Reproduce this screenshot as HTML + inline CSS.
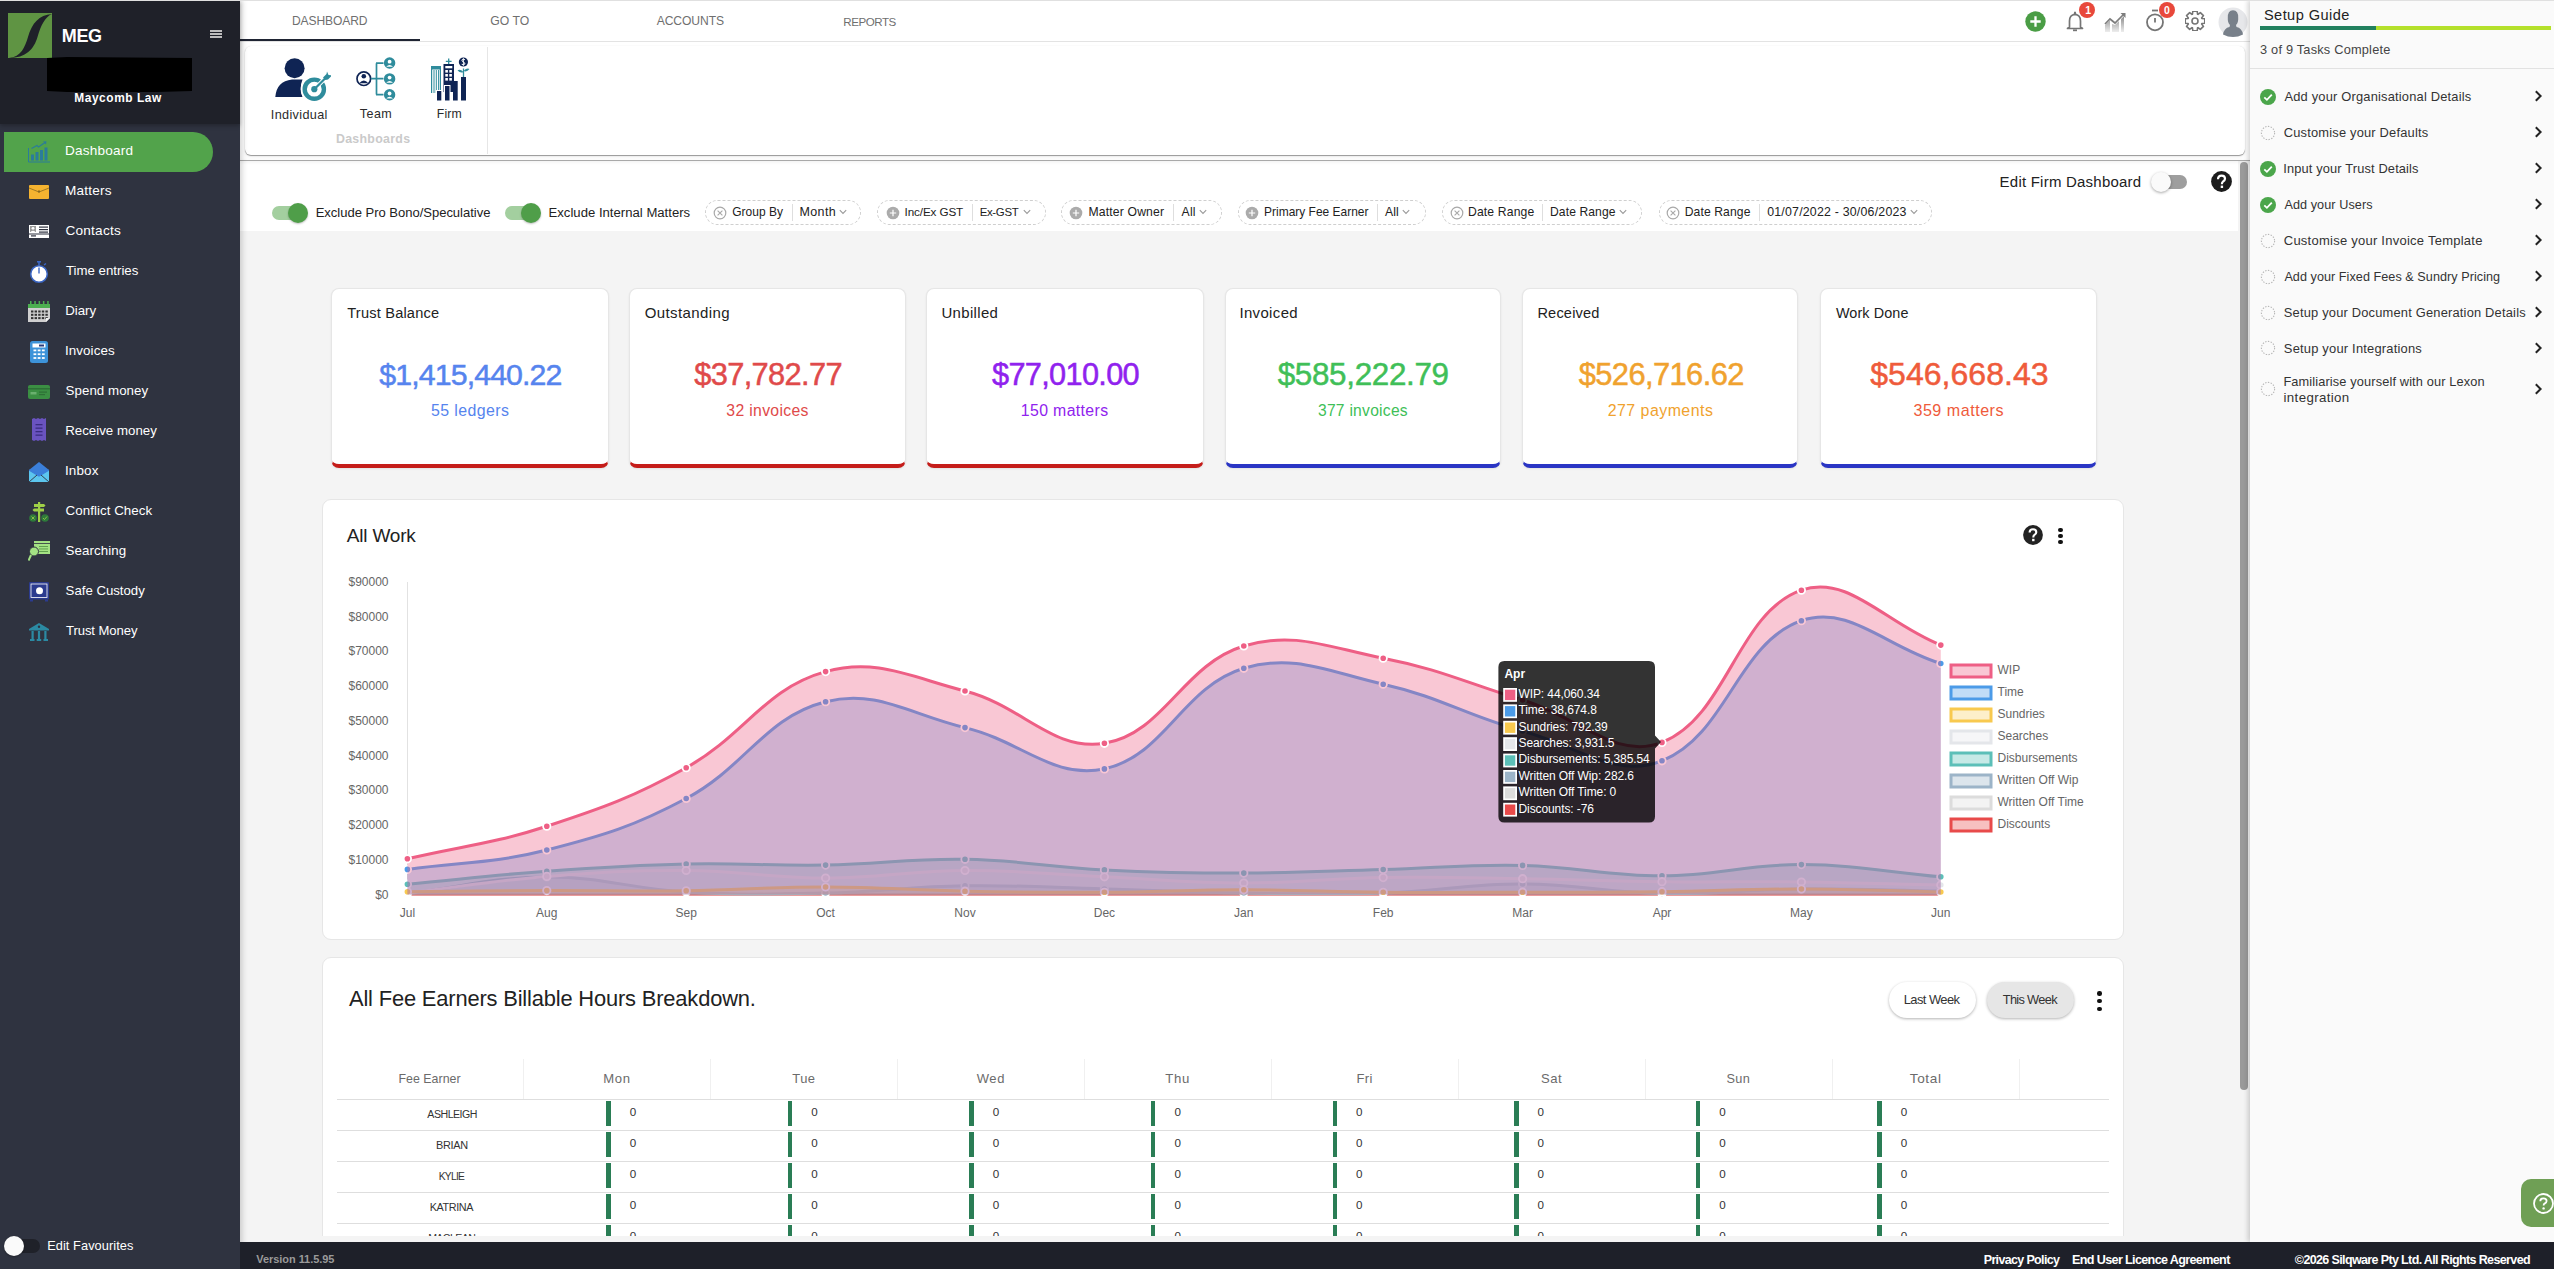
<!DOCTYPE html>
<html><head><meta charset="utf-8"><title>MEG Dashboard</title><style>
*{margin:0;padding:0;box-sizing:border-box}
html,body{width:2554px;height:1269px;overflow:hidden;background:#f4f4f4;font-family:"Liberation Sans",sans-serif}
.t{position:absolute;white-space:nowrap;line-height:1}
.r{position:absolute;display:block}
.ct{font-family:"Liberation Sans",sans-serif;font-size:12px;fill:#666}
</style></head><body>
<div class="r" style="left:240px;top:0;width:2314px;height:1242px;background:#f4f4f4"></div>
<div class="r" style="left:0;top:0;width:2554px;height:1px;background:#e0e0e0;z-index:5"></div>
<div class="r" style="left:240px;top:0px;width:2010px;height:41px;background:#fff;"></div>
<div class="r" style="left:240px;top:41px;width:2010px;height:1px;background:#e3e3e3;"></div>
<div class="r" style="left:240px;top:39px;width:180px;height:2px;background:#1f2433;"></div>
<div class="t" style="left:292.03px;top:15.00px;font-size:12.06px;letter-spacing:-0.114px;color:#6f6f6f;">DASHBOARD</div>
<div class="t" style="left:490.29px;top:15.00px;font-size:12.22px;letter-spacing:0.009px;color:#6f6f6f;">GO TO</div>
<div class="t" style="left:656.70px;top:15.00px;font-size:12.12px;letter-spacing:-0.075px;color:#6f6f6f;">ACCOUNTS</div>
<div class="t" style="left:843.27px;top:16.00px;font-size:11.60px;letter-spacing:-0.480px;color:#6f6f6f;">REPORTS</div>
<div class="r" style="left:240px;top:42px;width:2010px;height:118px;background:#fff;"></div>
<div class="r" style="left:245px;top:46px;width:2000px;height:109px;background:#fff;border-radius:6px;box-shadow:0 1px 1px rgba(0,0,0,.38),0 2px 4px rgba(0,0,0,.06),0 0 1px rgba(0,0,0,.12);"></div>
<div class="r" style="left:487px;top:47px;width:1px;height:107px;background:#e6e6e6;"></div>
<svg class="r" style="left:275px;top:57px;" width="56" height="46" viewBox="0 0 56 46"><circle cx="19.6" cy="11.2" r="10" fill="#0f2454"/><path d="M0.3 40 Q1.5 24 17 22.4 L27.5 22.4 Q24 31 27.5 40 Z" fill="#0f2454"/><circle cx="39.3" cy="32.2" r="13.6" fill="#fff"/><circle cx="39.3" cy="32.2" r="9.6" fill="none" stroke="#2f8c9c" stroke-width="4.4"/><path d="M44 27.5 L50 21.5" stroke="#fff" stroke-width="4"/><circle cx="39.3" cy="32.2" r="3.1" fill="#2f8c9c"/><path d="M39.3 32.2 L50.5 21" stroke="#2f8c9c" stroke-width="2.2"/><path d="M48 20.5 L51.5 17 L52 14.5 L53.5 18 L57 18.5 L53 22.5 L50.5 23 Z" fill="#2f8c9c"/></svg>
<svg class="r" style="left:356px;top:57px;" width="40" height="44" viewBox="0 0 40 44"><circle cx="7.8" cy="21.7" r="6.8" fill="#fff" stroke="#0f2454" stroke-width="1.7"/><circle cx="7.8" cy="19.3" r="2.3" fill="#0f2454"/><path d="M3.2 26.2 Q7.8 21 12.4 26.2 Z" fill="#0f2454"/><path d="M14.8 21.7 H27.5 M20.5 6.2 V37.6 M20 6.2 H27.5 M20 37.6 H27.5" stroke="#2f8c9c" stroke-width="1.7" fill="none"/><circle cx="33.6" cy="6" r="5.7" fill="#2f8c9c"/><circle cx="33.6" cy="4.7" r="1.9" fill="#fff"/><path d="M30.2 9.8 Q33.6 6.3 37 9.8 Z" fill="#fff"/><circle cx="33.6" cy="21.9" r="5.7" fill="#2f8c9c"/><circle cx="33.6" cy="20.599999999999998" r="1.9" fill="#fff"/><path d="M30.2 25.7 Q33.6 22.2 37 25.7 Z" fill="#fff"/><circle cx="33.6" cy="37.8" r="5.7" fill="#2f8c9c"/><circle cx="33.6" cy="36.5" r="1.9" fill="#fff"/><path d="M30.2 41.599999999999994 Q33.6 38.099999999999994 37 41.599999999999994 Z" fill="#fff"/></svg>
<svg class="r" style="left:430px;top:57px;" width="40" height="45" viewBox="0 0 40 45"><rect x="1" y="9" width="10" height="27.5" fill="#fff"/><path d="M1.6 36 V9.6 H10.4 V36" fill="none" stroke="#2f8c9c" stroke-width="1.2"/><rect x="1" y="9" width="10" height="3.5" fill="#2f8c9c"/><path d="M4 13 V36 M6.3 13 V36 M8.6 13 V36" stroke="#2f8c9c" stroke-width="1"/><rect x="13.5" y="7" width="10.5" height="28" fill="#0f2454"/><path d="M18.7 1.5 V7 M15.8 4.3 H21.6" stroke="#2f8c9c" stroke-width="1.3"/><rect x="15.3" y="9" width="7" height="2.3" fill="#fff"/><rect x="15.3" y="13" width="2.6" height="2.6" fill="#fff"/><rect x="19.3" y="13" width="2.6" height="2.6" fill="#fff"/><rect x="15.3" y="17" width="2.6" height="2.6" fill="#fff"/><rect x="19.3" y="17" width="2.6" height="2.6" fill="#fff"/><rect x="15.3" y="21" width="2.6" height="2.6" fill="#fff"/><rect x="19.3" y="21" width="2.6" height="2.6" fill="#fff"/><rect x="6" y="33" width="6.3" height="12" fill="#fff"/><rect x="7" y="34" width="4.3" height="9.5" fill="#0f2454"/><rect x="14" y="28" width="6.5" height="17" fill="#fff"/><rect x="15" y="29" width="4.5" height="14.5" fill="#0f2454"/><rect x="23" y="24" width="4.7" height="19.5" fill="#0f2454"/><rect x="31" y="20" width="5" height="23.5" fill="#0f2454"/><circle cx="33.4" cy="5" r="4.6" fill="#0f2454"/><path d="M35 2.7 Q33.4 1.8 32 2.8 Q31.2 4 33.4 5 Q35.6 5.9 34.8 7.2 Q33.4 8.2 31.7 7.3 M33.4 1.2 V8.8" stroke="#fff" stroke-width="0.9" fill="none"/><path d="M33.5 20 V11.5" stroke="#2f8c9c" stroke-width="1.3"/><path d="M33.5 15 Q30 11.5 27.5 13.5 Q30.5 16.5 33.5 15 Z M33.5 14 Q37 10.5 39.5 12 Q37 15.5 33.5 14 Z" fill="#2f8c9c"/></svg>
<div class="t" style="left:270.86px;top:109.00px;font-size:12.67px;letter-spacing:0.338px;color:#2b2b2b;">Individual</div>
<div class="t" style="left:359.75px;top:108.00px;font-size:12.53px;letter-spacing:0.479px;color:#2b2b2b;">Team</div>
<div class="t" style="left:436.72px;top:108.00px;font-size:12.24px;letter-spacing:0.198px;color:#2b2b2b;">Firm</div>
<div class="t" style="left:336.00px;top:133.00px;font-size:12.37px;letter-spacing:0.287px;color:#cacaca;font-weight:700;">Dashboards</div>
<div class="r" style="left:240px;top:161px;width:1998px;height:70px;background:#fff;"></div>
<div class="r" style="left:240px;top:160px;width:2010px;height:1px;background:#a9a9a9;box-shadow:0 1px 3px rgba(0,0,0,.12);"></div>
<div class="r" style="left:272px;top:206px;width:32px;height:14px;background:#a3cf9f;border-radius:7px;"></div>
<div class="r" style="left:288px;top:203px;width:20px;height:20px;background:#4f9e49;border-radius:50%;box-shadow:0 1px 2px rgba(0,0,0,.25);"></div>
<div class="r" style="left:505px;top:206px;width:32px;height:14px;background:#a3cf9f;border-radius:7px;"></div>
<div class="r" style="left:521px;top:203px;width:20px;height:20px;background:#4f9e49;border-radius:50%;box-shadow:0 1px 2px rgba(0,0,0,.25);"></div>
<div class="t" style="left:315.66px;top:206.00px;font-size:13.04px;letter-spacing:-0.020px;color:#222;">Exclude Pro Bono/Speculative</div>
<div class="t" style="left:548.55px;top:206.00px;font-size:13.11px;letter-spacing:0.011px;color:#222;">Exclude Internal Matters</div>
<div class="r" style="left:705px;top:200px;width:156px;height:25px;border:1px dashed #cfcfcf;border-radius:13px;box-sizing:border-box;"></div>
<svg class="r" style="left:713px;top:205.5px;" width="14" height="14" viewBox="0 0 14 14"><circle cx="7" cy="7" r="5.8" fill="none" stroke="#a8a8a8" stroke-width="1.2"/><path d="M4.6 4.6 L9.4 9.4 M9.4 4.6 L4.6 9.4" stroke="#a8a8a8" stroke-width="1.1"/></svg>
<div class="t" style="left:732.20px;top:207.00px;font-size:11.97px;letter-spacing:0.031px;color:#222;">Group By</div>
<div class="r" style="left:792px;top:204px;width:1px;height:17px;background:#dedede;"></div>
<div class="t" style="left:799.50px;top:206.00px;font-size:12.49px;letter-spacing:0.379px;color:#222;">Month</div>
<svg class="r" style="left:839px;top:209px;" width="8" height="6" viewBox="0 0 8 6"><path d="M0.8 1.2 L4 4.4 L7.2 1.2" stroke="#999" stroke-width="1.1" fill="none"/></svg>
<div class="r" style="left:877px;top:200px;width:169px;height:25px;border:1px dashed #cfcfcf;border-radius:13px;box-sizing:border-box;"></div>
<svg class="r" style="left:886px;top:205.5px;" width="14" height="14" viewBox="0 0 14 14"><circle cx="7" cy="7" r="6.3" fill="#ababab"/><path d="M7 3.8 V10.2 M3.8 7 H10.2" stroke="#fff" stroke-width="1.2"/></svg>
<div class="t" style="left:904.55px;top:206.00px;font-size:11.70px;letter-spacing:-0.122px;color:#222;">Inc/Ex GST</div>
<div class="r" style="left:972px;top:204px;width:1px;height:17px;background:#dedede;"></div>
<div class="t" style="left:979.68px;top:207.00px;font-size:11.44px;letter-spacing:-0.328px;color:#222;">Ex-GST</div>
<svg class="r" style="left:1022.5px;top:209px;" width="8" height="6" viewBox="0 0 8 6"><path d="M0.8 1.2 L4 4.4 L7.2 1.2" stroke="#999" stroke-width="1.1" fill="none"/></svg>
<div class="r" style="left:1061px;top:200px;width:161px;height:25px;border:1px dashed #cfcfcf;border-radius:13px;box-sizing:border-box;"></div>
<svg class="r" style="left:1069.3px;top:205.5px;" width="14" height="14" viewBox="0 0 14 14"><circle cx="7" cy="7" r="6.3" fill="#ababab"/><path d="M7 3.8 V10.2 M3.8 7 H10.2" stroke="#fff" stroke-width="1.2"/></svg>
<div class="t" style="left:1088.52px;top:206.00px;font-size:12.20px;letter-spacing:0.155px;color:#222;">Matter Owner</div>
<div class="r" style="left:1173px;top:204px;width:1px;height:17px;background:#dedede;"></div>
<div class="t" style="left:1181.60px;top:206.00px;font-size:12.23px;letter-spacing:0.161px;color:#222;">All</div>
<svg class="r" style="left:1198.7px;top:209px;" width="8" height="6" viewBox="0 0 8 6"><path d="M0.8 1.2 L4 4.4 L7.2 1.2" stroke="#999" stroke-width="1.1" fill="none"/></svg>
<div class="r" style="left:1238px;top:200px;width:188px;height:25px;border:1px dashed #cfcfcf;border-radius:13px;box-sizing:border-box;"></div>
<svg class="r" style="left:1245px;top:205.5px;" width="14" height="14" viewBox="0 0 14 14"><circle cx="7" cy="7" r="6.3" fill="#ababab"/><path d="M7 3.8 V10.2 M3.8 7 H10.2" stroke="#fff" stroke-width="1.2"/></svg>
<div class="t" style="left:1264.04px;top:207.00px;font-size:11.95px;letter-spacing:0.016px;color:#222;">Primary Fee Earner</div>
<div class="r" style="left:1377px;top:204px;width:1px;height:17px;background:#dedede;"></div>
<div class="t" style="left:1385.00px;top:206.00px;font-size:12.18px;letter-spacing:0.136px;color:#222;">All</div>
<svg class="r" style="left:1402px;top:209px;" width="8" height="6" viewBox="0 0 8 6"><path d="M0.8 1.2 L4 4.4 L7.2 1.2" stroke="#999" stroke-width="1.1" fill="none"/></svg>
<div class="r" style="left:1442px;top:200px;width:200px;height:25px;border:1px dashed #cfcfcf;border-radius:13px;box-sizing:border-box;"></div>
<svg class="r" style="left:1449.8px;top:205.5px;" width="14" height="14" viewBox="0 0 14 14"><circle cx="7" cy="7" r="5.8" fill="none" stroke="#a8a8a8" stroke-width="1.2"/><path d="M4.6 4.6 L9.4 9.4 M9.4 4.6 L4.6 9.4" stroke="#a8a8a8" stroke-width="1.1"/></svg>
<div class="t" style="left:1468.03px;top:206.00px;font-size:12.17px;letter-spacing:0.147px;color:#222;">Date Range</div>
<div class="r" style="left:1542px;top:204px;width:1px;height:17px;background:#dedede;"></div>
<div class="t" style="left:1550.03px;top:206.00px;font-size:12.10px;letter-spacing:0.102px;color:#222;">Date Range</div>
<svg class="r" style="left:1619px;top:209px;" width="8" height="6" viewBox="0 0 8 6"><path d="M0.8 1.2 L4 4.4 L7.2 1.2" stroke="#999" stroke-width="1.1" fill="none"/></svg>
<div class="r" style="left:1659px;top:200px;width:273px;height:25px;border:1px dashed #cfcfcf;border-radius:13px;box-sizing:border-box;"></div>
<svg class="r" style="left:1666px;top:205.5px;" width="14" height="14" viewBox="0 0 14 14"><circle cx="7" cy="7" r="5.8" fill="none" stroke="#a8a8a8" stroke-width="1.2"/><path d="M4.6 4.6 L9.4 9.4 M9.4 4.6 L4.6 9.4" stroke="#a8a8a8" stroke-width="1.1"/></svg>
<div class="t" style="left:1684.73px;top:206.00px;font-size:12.12px;letter-spacing:0.119px;color:#222;">Date Range</div>
<div class="r" style="left:1759px;top:204px;width:1px;height:17px;background:#dedede;"></div>
<div class="t" style="left:1767.21px;top:206.00px;font-size:12.35px;letter-spacing:0.212px;color:#222;">01/07/2022 - 30/06/2023</div>
<svg class="r" style="left:1910px;top:209px;" width="8" height="6" viewBox="0 0 8 6"><path d="M0.8 1.2 L4 4.4 L7.2 1.2" stroke="#999" stroke-width="1.1" fill="none"/></svg>
<div class="t" style="left:1999.60px;top:174.00px;font-size:14.99px;letter-spacing:0.229px;color:#222;">Edit Firm Dashboard</div>
<div class="r" style="left:2155px;top:175px;width:32px;height:14px;background:#9e9e9e;border-radius:7px;"></div>
<div class="r" style="left:2151px;top:172px;width:20px;height:20px;background:#fafafa;border-radius:50%;box-shadow:0 1px 3px rgba(0,0,0,.35);"></div>
<svg class="r" style="left:2210.5px;top:170.5px;" width="21" height="21" viewBox="0 0 21 21"><circle cx="10.5" cy="10.5" r="10.4" fill="#1c1c1c"/><path d="M7 8.2 Q7 4.6 10.6 4.6 Q14 4.6 14 7.8 Q14 9.6 11.8 10.8 Q10.9 11.4 10.9 13.2" stroke="#fff" stroke-width="2.2" fill="none"/><rect x="9.7" y="14.6" width="2.4" height="2.4" fill="#fff"/></svg>
<svg class="r" style="left:2024.8px;top:10.7px;" width="21" height="21" viewBox="0 0 21 21"><circle cx="10.5" cy="10.5" r="10.2" fill="#4a9d45"/><path d="M10.5 5.3 V15.7 M5.3 10.5 H15.7" stroke="#fff" stroke-width="2.3"/></svg>
<svg class="r" style="left:2066px;top:11px;" width="18" height="21" viewBox="0 0 18 21"><path d="M9 1.5 Q9 1 9 2 M3.5 16 V10 Q3.5 3.8 9 3.5 Q14.5 3.8 14.5 10 V16 L16.5 17.5 H1.5 Z" fill="none" stroke="#757575" stroke-width="1.7" stroke-linejoin="round"/><circle cx="9" cy="2.2" r="1.2" fill="#757575"/><path d="M7 19.3 H11" stroke="#757575" stroke-width="1.8"/></svg>
<div class="r" style="left:2079px;top:2px;width:16px;height:16px;background:#e8483b;border-radius:50%;"></div>
<div class="t" style="left:2085.17px;top:6.00px;font-size:10.47px;letter-spacing:0.000px;color:#fff;font-weight:700;">1</div>
<svg class="r" style="left:2104px;top:12px;" width="23" height="20" viewBox="0 0 23 20"><defs><linearGradient id="gfade" x1="0" y1="0" x2="0" y2="1"><stop offset="0" stop-color="#8a8a8a"/><stop offset="1" stop-color="#8a8a8a" stop-opacity="0.15"/></linearGradient></defs><path d="M1 12 L6 7 L11 11 L20 2" stroke="#7d7d7d" stroke-width="1.7" fill="none"/><path d="M16.5 1 H21.5 V6 Z" fill="#7d7d7d"/><path d="M1 13 L6 8.5 L6 20 H1 Z M8 12 L11 13 L15 9 V20 H8 Z M17 7 L20 4 V20 H17 Z" fill="url(#gfade)"/></svg>
<svg class="r" style="left:2145px;top:9px;" width="20" height="23" viewBox="0 0 20 23"><path d="M7 1.5 H13" stroke="#757575" stroke-width="1.8"/><circle cx="10" cy="13.3" r="8" fill="none" stroke="#757575" stroke-width="1.8"/><path d="M10 9 V13.5" stroke="#757575" stroke-width="1.8"/></svg>
<div class="r" style="left:2159px;top:2px;width:16px;height:16px;background:#e8483b;border-radius:50%;"></div>
<div class="t" style="left:2163.98px;top:6.00px;font-size:10.47px;letter-spacing:0.000px;color:#fff;font-weight:700;">0</div>
<svg class="r" style="left:2185px;top:11px;" width="20" height="20" viewBox="0 0 20 20"><path d="M19.76 7.82 L19.76 12.18 L16.83 12.57 L16.65 13.01 L18.44 15.36 L15.36 18.44 L13.01 16.65 L12.57 16.83 L12.18 19.76 L7.82 19.76 L7.43 16.83 L6.99 16.65 L4.64 18.44 L1.56 15.36 L3.35 13.01 L3.17 12.57 L0.24 12.18 L0.24 7.82 L3.17 7.43 L3.35 6.99 L1.56 4.64 L4.64 1.56 L6.99 3.35 L7.43 3.17 L7.82 0.24 L12.18 0.24 L12.57 3.17 L13.01 3.35 L15.36 1.56 L18.44 4.64 L16.65 6.99 L16.83 7.43 Z" fill="none" stroke="#757575" stroke-width="1.6" stroke-linejoin="round"/><circle cx="10" cy="10" r="3" fill="none" stroke="#757575" stroke-width="1.6"/></svg>
<svg class="r" style="left:2218px;top:7px;" width="30" height="30" viewBox="0 0 30 30"><circle cx="15" cy="15" r="14.5" fill="#e6e7ea"/><path d="M5 27.5 Q6 21 11.5 20 L12 18 Q9.5 15.5 9.8 11 Q9.5 3.5 15 3.3 Q20.5 3.5 20.2 11 Q20.5 15.5 18 18 L18.5 20 Q24 21 25 27.5 Q20 30 15 30 Q10 30 5 27.5 Z" fill="#78808a"/></svg>
<div class="r" style="left:331px;top:288px;width:278px;height:180px;background:#fff;border:1px solid #e6e6e6;border-bottom:4px solid #c51d1a;border-radius:8px;box-sizing:border-box;box-shadow:0 1px 2px rgba(0,0,0,.08);"></div>
<div class="t" style="left:347.31px;top:306.00px;font-size:14.61px;letter-spacing:0.185px;color:#222;">Trust Balance</div>
<div class="t" style="left:379.30px;top:360.00px;font-size:30.30px;letter-spacing:-0.886px;color:#5684ee;-webkit-text-stroke:0.5px #5684ee;">$1,415,440.22</div>
<div class="t" style="left:430.96px;top:403.00px;font-size:15.92px;letter-spacing:0.408px;color:#5684ee;">55 ledgers</div>
<div class="r" style="left:629px;top:288px;width:277px;height:180px;background:#fff;border:1px solid #e6e6e6;border-bottom:4px solid #c51d1a;border-radius:8px;box-sizing:border-box;box-shadow:0 1px 2px rgba(0,0,0,.08);"></div>
<div class="t" style="left:644.72px;top:305.00px;font-size:15.00px;letter-spacing:0.401px;color:#222;">Outstanding</div>
<div class="t" style="left:694.19px;top:360.00px;font-size:30.80px;letter-spacing:-0.646px;color:#e04a4a;-webkit-text-stroke:0.5px #e04a4a;">$37,782.77</div>
<div class="t" style="left:726.35px;top:403.00px;font-size:15.77px;letter-spacing:0.325px;color:#e04a4a;">32 invoices</div>
<div class="r" style="left:926px;top:288px;width:278px;height:180px;background:#fff;border:1px solid #e6e6e6;border-bottom:4px solid #c51d1a;border-radius:8px;box-sizing:border-box;box-shadow:0 1px 2px rgba(0,0,0,.08);"></div>
<div class="t" style="left:941.48px;top:306.00px;font-size:14.95px;letter-spacing:0.350px;color:#222;">Unbilled</div>
<div class="t" style="left:992.09px;top:360.00px;font-size:30.73px;letter-spacing:-0.689px;color:#9022ee;-webkit-text-stroke:0.5px #9022ee;">$77,010.00</div>
<div class="t" style="left:1020.81px;top:403.00px;font-size:15.84px;letter-spacing:0.372px;color:#9022ee;">150 matters</div>
<div class="r" style="left:1225px;top:288px;width:276px;height:180px;background:#fff;border:1px solid #e6e6e6;border-bottom:4px solid #2a35c4;border-radius:8px;box-sizing:border-box;box-shadow:0 1px 2px rgba(0,0,0,.08);"></div>
<div class="t" style="left:1239.45px;top:306.00px;font-size:14.95px;letter-spacing:0.363px;color:#222;">Invoiced</div>
<div class="t" style="left:1277.69px;top:359.00px;font-size:31.40px;letter-spacing:-0.317px;color:#40bf58;-webkit-text-stroke:0.5px #40bf58;">$585,222.79</div>
<div class="t" style="left:1317.95px;top:403.00px;font-size:15.64px;letter-spacing:0.260px;color:#40bf58;">377 invoices</div>
<div class="r" style="left:1522px;top:288px;width:276px;height:180px;background:#fff;border:1px solid #e6e6e6;border-bottom:4px solid #2a35c4;border-radius:8px;box-sizing:border-box;box-shadow:0 1px 2px rgba(0,0,0,.08);"></div>
<div class="t" style="left:1537.43px;top:306.00px;font-size:14.57px;letter-spacing:0.185px;color:#222;">Received</div>
<div class="t" style="left:1578.69px;top:360.00px;font-size:30.89px;letter-spacing:-0.599px;color:#f0a22e;-webkit-text-stroke:0.5px #f0a22e;">$526,716.62</div>
<div class="t" style="left:1607.70px;top:403.00px;font-size:15.94px;letter-spacing:0.462px;color:#f0a22e;">277 payments</div>
<div class="r" style="left:1820px;top:288px;width:277px;height:180px;background:#fff;border:1px solid #e6e6e6;border-bottom:4px solid #2a35c4;border-radius:8px;box-sizing:border-box;box-shadow:0 1px 2px rgba(0,0,0,.08);"></div>
<div class="t" style="left:1835.93px;top:306.00px;font-size:14.40px;letter-spacing:0.094px;color:#222;">Work Done</div>
<div class="t" style="left:1870.28px;top:358.00px;font-size:32.02px;letter-spacing:0.025px;color:#ef5b3b;-webkit-text-stroke:0.5px #ef5b3b;">$546,668.43</div>
<div class="t" style="left:1913.44px;top:402.00px;font-size:16.10px;letter-spacing:0.512px;color:#ef5b3b;">359 matters</div>
<div class="r" style="left:322px;top:498.5px;width:1802px;height:441.5px;background:#fff;border:1px solid #e6e6e6;border-radius:9px;box-sizing:border-box;"></div>
<div class="t" style="left:346.70px;top:526.00px;font-size:19.00px;letter-spacing:-0.173px;color:#222;">All Work</div>
<svg class="r" style="left:2023px;top:525.3px;" width="20" height="20" viewBox="0 0 20 20"><circle cx="10" cy="10" r="9.9" fill="#222"/><path d="M6.6 7.6 Q6.6 4.2 10 4.2 Q13.3 4.2 13.3 7.2 Q13.3 9 11.2 10.2 Q10.3 10.8 10.3 12.6" stroke="#fff" stroke-width="2.1" fill="none"/><rect x="9.1" y="13.8" width="2.4" height="2.4" fill="#fff"/></svg>
<div class="r" style="left:2058.3px;top:527.5px;width:4.599999999999909px;height:4.599999999999909px;background:#111;border-radius:50%;"></div>
<div class="r" style="left:2058.3px;top:533.7px;width:4.599999999999909px;height:4.599999999999909px;background:#111;border-radius:50%;"></div>
<div class="r" style="left:2058.3px;top:539.9000000000001px;width:4.599999999999909px;height:4.599999999999909px;background:#111;border-radius:50%;"></div>
<svg class="r" style="left:0;top:0" width="2554" height="1269" viewBox="0 0 2554 1269"><text x="388.5" y="585.7" text-anchor="end" class="ct">$90000</text><text x="388.5" y="620.5" text-anchor="end" class="ct">$80000</text><text x="388.5" y="655.3" text-anchor="end" class="ct">$70000</text><text x="388.5" y="690.1" text-anchor="end" class="ct">$60000</text><text x="388.5" y="724.9" text-anchor="end" class="ct">$50000</text><text x="388.5" y="759.6" text-anchor="end" class="ct">$40000</text><text x="388.5" y="794.4" text-anchor="end" class="ct">$30000</text><text x="388.5" y="829.2" text-anchor="end" class="ct">$20000</text><text x="388.5" y="864.0" text-anchor="end" class="ct">$10000</text><text x="388.5" y="898.8" text-anchor="end" class="ct">$0</text><line x1="407.5" y1="582" x2="407.5" y2="895" stroke="#e2e2e2" stroke-width="1"/><text x="407.4" y="916.6" text-anchor="middle" class="ct">Jul</text><text x="546.8" y="916.6" text-anchor="middle" class="ct">Aug</text><text x="686.2" y="916.6" text-anchor="middle" class="ct">Sep</text><text x="825.6" y="916.6" text-anchor="middle" class="ct">Oct</text><text x="965.0" y="916.6" text-anchor="middle" class="ct">Nov</text><text x="1104.4" y="916.6" text-anchor="middle" class="ct">Dec</text><text x="1243.8" y="916.6" text-anchor="middle" class="ct">Jan</text><text x="1383.2" y="916.6" text-anchor="middle" class="ct">Feb</text><text x="1522.6" y="916.6" text-anchor="middle" class="ct">Mar</text><text x="1662.0" y="916.6" text-anchor="middle" class="ct">Apr</text><text x="1801.4" y="916.6" text-anchor="middle" class="ct">May</text><text x="1940.8" y="916.6" text-anchor="middle" class="ct">Jun</text><defs><clipPath id="carea"><rect x="380" y="560" width="1600" height="335.6"/></clipPath></defs><g clip-path="url(#carea)"><path d="M407.40 894.50 C463.16 894.50 491.04 894.50 546.80 894.50 C602.56 894.50 630.44 894.50 686.20 894.50 C741.96 894.50 769.84 894.50 825.60 894.50 C881.36 894.50 909.24 894.50 965.00 894.50 C1020.76 894.50 1048.64 894.50 1104.40 894.50 C1160.16 894.50 1188.04 894.50 1243.80 894.50 C1299.56 894.50 1327.44 894.50 1383.20 894.50 C1438.96 894.50 1466.84 894.50 1522.60 894.50 C1578.36 894.50 1606.24 894.50 1662.00 894.50 C1717.76 894.50 1745.64 894.50 1801.40 894.50 C1857.16 894.50 1885.04 894.50 1940.80 894.50 L1940.80 894.5 L407.40 894.5 Z" fill="rgba(220,220,220,0.35)"/><path d="M407.40 894.50 C463.16 894.50 491.04 894.50 546.80 894.50 C602.56 894.50 630.44 894.50 686.20 894.50 C741.96 894.50 769.84 894.50 825.60 894.50 C881.36 894.50 909.24 894.50 965.00 894.50 C1020.76 894.50 1048.64 894.50 1104.40 894.50 C1160.16 894.50 1188.04 894.50 1243.80 894.50 C1299.56 894.50 1327.44 894.50 1383.20 894.50 C1438.96 894.50 1466.84 894.50 1522.60 894.50 C1578.36 894.50 1606.24 894.50 1662.00 894.50 C1717.76 894.50 1745.64 894.50 1801.40 894.50 C1857.16 894.50 1885.04 894.50 1940.80 894.50" fill="none" stroke="#dcdcdc" stroke-width="3"/></g><g clip-path="url(#carea)"><path d="M407.40 894.80 C463.16 894.80 491.04 894.80 546.80 894.80 C602.56 894.80 630.44 894.80 686.20 894.80 C741.96 894.80 769.84 894.80 825.60 894.80 C881.36 894.80 909.24 894.80 965.00 894.80 C1020.76 894.80 1048.64 894.80 1104.40 894.80 C1160.16 894.80 1188.04 894.80 1243.80 894.80 C1299.56 894.80 1327.44 894.80 1383.20 894.80 C1438.96 894.80 1466.84 894.80 1522.60 894.80 C1578.36 894.80 1606.24 894.80 1662.00 894.80 C1717.76 894.80 1745.64 894.80 1801.40 894.80 C1857.16 894.80 1885.04 894.80 1940.80 894.80 L1940.80 894.5 L407.40 894.5 Z" fill="rgba(232,74,74,0.35)"/><path d="M407.40 894.80 C463.16 894.80 491.04 894.80 546.80 894.80 C602.56 894.80 630.44 894.80 686.20 894.80 C741.96 894.80 769.84 894.80 825.60 894.80 C881.36 894.80 909.24 894.80 965.00 894.80 C1020.76 894.80 1048.64 894.80 1104.40 894.80 C1160.16 894.80 1188.04 894.80 1243.80 894.80 C1299.56 894.80 1327.44 894.80 1383.20 894.80 C1438.96 894.80 1466.84 894.80 1522.60 894.80 C1578.36 894.80 1606.24 894.80 1662.00 894.80 C1717.76 894.80 1745.64 894.80 1801.40 894.80 C1857.16 894.80 1885.04 894.80 1940.80 894.80" fill="none" stroke="#e84a4a" stroke-width="3"/></g><g clip-path="url(#carea)"><path d="M407.40 893.50 C463.16 886.90 491.01 877.30 546.80 877.00 C602.53 876.70 630.28 888.79 686.20 892.00 C741.80 895.19 769.88 894.24 825.60 893.00 C881.40 891.76 909.21 886.60 965.00 885.80 C1020.73 885.00 1048.64 887.56 1104.40 889.00 C1160.16 890.44 1188.03 892.20 1243.80 893.00 C1299.55 893.80 1327.50 894.80 1383.20 893.00 C1439.02 891.20 1466.85 883.90 1522.60 884.00 C1578.37 884.10 1606.19 892.50 1662.00 893.50 C1717.71 894.50 1745.63 889.50 1801.40 889.00 C1857.15 888.50 1885.04 890.20 1940.80 891.00 L1940.80 894.5 L407.40 894.5 Z" fill="rgba(156,180,200,0.35)"/><path d="M407.40 893.50 C463.16 886.90 491.01 877.30 546.80 877.00 C602.53 876.70 630.28 888.79 686.20 892.00 C741.80 895.19 769.88 894.24 825.60 893.00 C881.40 891.76 909.21 886.60 965.00 885.80 C1020.73 885.00 1048.64 887.56 1104.40 889.00 C1160.16 890.44 1188.03 892.20 1243.80 893.00 C1299.55 893.80 1327.50 894.80 1383.20 893.00 C1439.02 891.20 1466.85 883.90 1522.60 884.00 C1578.37 884.10 1606.19 892.50 1662.00 893.50 C1717.71 894.50 1745.63 889.50 1801.40 889.00 C1857.15 888.50 1885.04 890.20 1940.80 891.00" fill="none" stroke="#9cb4c8" stroke-width="3"/></g><circle cx="407.40" cy="893.50" r="3.7" fill="#9cb4c8" stroke="#fff" stroke-width="1.8"/><circle cx="546.80" cy="877.00" r="3.7" fill="#9cb4c8" stroke="#fff" stroke-width="1.8"/><circle cx="686.20" cy="892.00" r="3.7" fill="#9cb4c8" stroke="#fff" stroke-width="1.8"/><circle cx="825.60" cy="893.00" r="3.7" fill="#9cb4c8" stroke="#fff" stroke-width="1.8"/><circle cx="965.00" cy="885.80" r="3.7" fill="#9cb4c8" stroke="#fff" stroke-width="1.8"/><circle cx="1104.40" cy="889.00" r="3.7" fill="#9cb4c8" stroke="#fff" stroke-width="1.8"/><circle cx="1243.80" cy="893.00" r="3.7" fill="#9cb4c8" stroke="#fff" stroke-width="1.8"/><circle cx="1383.20" cy="893.00" r="3.7" fill="#9cb4c8" stroke="#fff" stroke-width="1.8"/><circle cx="1522.60" cy="884.00" r="3.7" fill="#9cb4c8" stroke="#fff" stroke-width="1.8"/><circle cx="1662.00" cy="893.50" r="3.7" fill="#9cb4c8" stroke="#fff" stroke-width="1.8"/><circle cx="1801.40" cy="889.00" r="3.7" fill="#9cb4c8" stroke="#fff" stroke-width="1.8"/><circle cx="1940.80" cy="891.00" r="3.7" fill="#9cb4c8" stroke="#fff" stroke-width="1.8"/><g clip-path="url(#carea)"><path d="M407.40 884.20 C463.16 879.00 490.96 875.25 546.80 871.20 C602.48 867.17 630.40 865.22 686.20 864.00 C741.92 862.78 769.86 866.04 825.60 865.10 C881.38 864.16 909.30 858.34 965.00 859.30 C1020.82 860.26 1048.57 867.14 1104.40 869.90 C1160.09 872.66 1188.04 873.18 1243.80 873.10 C1299.56 873.02 1327.44 871.04 1383.20 869.50 C1438.96 867.96 1466.91 864.14 1522.60 865.40 C1578.43 866.66 1606.25 875.96 1662.00 875.80 C1717.77 875.64 1745.66 864.40 1801.40 864.60 C1857.18 864.80 1885.04 871.92 1940.80 876.80 L1940.80 894.5 L407.40 894.5 Z" fill="rgba(92,191,184,0.35)"/><path d="M407.40 884.20 C463.16 879.00 490.96 875.25 546.80 871.20 C602.48 867.17 630.40 865.22 686.20 864.00 C741.92 862.78 769.86 866.04 825.60 865.10 C881.38 864.16 909.30 858.34 965.00 859.30 C1020.82 860.26 1048.57 867.14 1104.40 869.90 C1160.09 872.66 1188.04 873.18 1243.80 873.10 C1299.56 873.02 1327.44 871.04 1383.20 869.50 C1438.96 867.96 1466.91 864.14 1522.60 865.40 C1578.43 866.66 1606.25 875.96 1662.00 875.80 C1717.77 875.64 1745.66 864.40 1801.40 864.60 C1857.18 864.80 1885.04 871.92 1940.80 876.80" fill="none" stroke="#5cbfb8" stroke-width="3"/></g><circle cx="407.40" cy="884.20" r="3.7" fill="#5cbfb8" stroke="#fff" stroke-width="1.8"/><circle cx="546.80" cy="871.20" r="3.7" fill="#5cbfb8" stroke="#fff" stroke-width="1.8"/><circle cx="686.20" cy="864.00" r="3.7" fill="#5cbfb8" stroke="#fff" stroke-width="1.8"/><circle cx="825.60" cy="865.10" r="3.7" fill="#5cbfb8" stroke="#fff" stroke-width="1.8"/><circle cx="965.00" cy="859.30" r="3.7" fill="#5cbfb8" stroke="#fff" stroke-width="1.8"/><circle cx="1104.40" cy="869.90" r="3.7" fill="#5cbfb8" stroke="#fff" stroke-width="1.8"/><circle cx="1243.80" cy="873.10" r="3.7" fill="#5cbfb8" stroke="#fff" stroke-width="1.8"/><circle cx="1383.20" cy="869.50" r="3.7" fill="#5cbfb8" stroke="#fff" stroke-width="1.8"/><circle cx="1522.60" cy="865.40" r="3.7" fill="#5cbfb8" stroke="#fff" stroke-width="1.8"/><circle cx="1662.00" cy="875.80" r="3.7" fill="#5cbfb8" stroke="#fff" stroke-width="1.8"/><circle cx="1801.40" cy="864.60" r="3.7" fill="#5cbfb8" stroke="#fff" stroke-width="1.8"/><circle cx="1940.80" cy="876.80" r="3.7" fill="#5cbfb8" stroke="#fff" stroke-width="1.8"/><g clip-path="url(#carea)"><path d="M407.40 893.00 C463.16 886.36 490.87 880.91 546.80 876.40 C602.39 871.91 630.46 870.18 686.20 870.50 C741.98 870.82 769.84 878.00 825.60 878.00 C881.36 878.00 909.23 870.74 965.00 870.50 C1020.75 870.26 1048.64 874.30 1104.40 876.80 C1160.16 879.30 1188.03 882.84 1243.80 883.00 C1299.55 883.16 1327.42 878.46 1383.20 877.60 C1438.94 876.74 1466.85 877.88 1522.60 878.70 C1578.37 879.52 1606.23 881.04 1662.00 881.70 C1717.75 882.36 1745.65 881.34 1801.40 882.00 C1857.17 882.66 1885.04 883.80 1940.80 885.00 L1940.80 894.5 L407.40 894.5 Z" fill="rgba(228,230,234,0.35)"/><path d="M407.40 893.00 C463.16 886.36 490.87 880.91 546.80 876.40 C602.39 871.91 630.46 870.18 686.20 870.50 C741.98 870.82 769.84 878.00 825.60 878.00 C881.36 878.00 909.23 870.74 965.00 870.50 C1020.75 870.26 1048.64 874.30 1104.40 876.80 C1160.16 879.30 1188.03 882.84 1243.80 883.00 C1299.55 883.16 1327.42 878.46 1383.20 877.60 C1438.94 876.74 1466.85 877.88 1522.60 878.70 C1578.37 879.52 1606.23 881.04 1662.00 881.70 C1717.75 882.36 1745.65 881.34 1801.40 882.00 C1857.17 882.66 1885.04 883.80 1940.80 885.00" fill="none" stroke="#e4e6ea" stroke-width="3"/></g><circle cx="407.40" cy="893.00" r="3.7" fill="#e4e6ea" stroke="#fff" stroke-width="1.8"/><circle cx="546.80" cy="876.40" r="3.7" fill="#e4e6ea" stroke="#fff" stroke-width="1.8"/><circle cx="686.20" cy="870.50" r="3.7" fill="#e4e6ea" stroke="#fff" stroke-width="1.8"/><circle cx="825.60" cy="878.00" r="3.7" fill="#e4e6ea" stroke="#fff" stroke-width="1.8"/><circle cx="965.00" cy="870.50" r="3.7" fill="#e4e6ea" stroke="#fff" stroke-width="1.8"/><circle cx="1104.40" cy="876.80" r="3.7" fill="#e4e6ea" stroke="#fff" stroke-width="1.8"/><circle cx="1243.80" cy="883.00" r="3.7" fill="#e4e6ea" stroke="#fff" stroke-width="1.8"/><circle cx="1383.20" cy="877.60" r="3.7" fill="#e4e6ea" stroke="#fff" stroke-width="1.8"/><circle cx="1522.60" cy="878.70" r="3.7" fill="#e4e6ea" stroke="#fff" stroke-width="1.8"/><circle cx="1662.00" cy="881.70" r="3.7" fill="#e4e6ea" stroke="#fff" stroke-width="1.8"/><circle cx="1801.40" cy="882.00" r="3.7" fill="#e4e6ea" stroke="#fff" stroke-width="1.8"/><circle cx="1940.80" cy="885.00" r="3.7" fill="#e4e6ea" stroke="#fff" stroke-width="1.8"/><g clip-path="url(#carea)"><path d="M407.40 891.70 C463.16 891.26 491.04 890.78 546.80 890.60 C602.56 890.42 630.45 891.52 686.20 890.80 C741.97 890.08 769.84 886.92 825.60 887.00 C881.36 887.08 909.23 890.14 965.00 891.20 C1020.75 892.26 1048.64 892.58 1104.40 892.30 C1160.16 892.02 1188.04 889.80 1243.80 889.80 C1299.56 889.80 1327.44 891.82 1383.20 892.30 C1438.96 892.78 1466.84 892.32 1522.60 892.20 C1578.36 892.08 1606.25 892.34 1662.00 891.70 C1717.77 891.06 1745.64 888.94 1801.40 889.00 C1857.16 889.06 1885.04 890.80 1940.80 892.00 L1940.80 894.5 L407.40 894.5 Z" fill="rgba(248,201,79,0.3)"/><path d="M407.40 891.70 C463.16 891.26 491.04 890.78 546.80 890.60 C602.56 890.42 630.45 891.52 686.20 890.80 C741.97 890.08 769.84 886.92 825.60 887.00 C881.36 887.08 909.23 890.14 965.00 891.20 C1020.75 892.26 1048.64 892.58 1104.40 892.30 C1160.16 892.02 1188.04 889.80 1243.80 889.80 C1299.56 889.80 1327.44 891.82 1383.20 892.30 C1438.96 892.78 1466.84 892.32 1522.60 892.20 C1578.36 892.08 1606.25 892.34 1662.00 891.70 C1717.77 891.06 1745.64 888.94 1801.40 889.00 C1857.16 889.06 1885.04 890.80 1940.80 892.00" fill="none" stroke="#f8c94f" stroke-width="3"/></g><circle cx="407.40" cy="891.70" r="3.7" fill="#f8c94f" stroke="#fff" stroke-width="1.8"/><circle cx="546.80" cy="890.60" r="3.7" fill="#f8c94f" stroke="#fff" stroke-width="1.8"/><circle cx="686.20" cy="890.80" r="3.7" fill="#f8c94f" stroke="#fff" stroke-width="1.8"/><circle cx="825.60" cy="887.00" r="3.7" fill="#f8c94f" stroke="#fff" stroke-width="1.8"/><circle cx="965.00" cy="891.20" r="3.7" fill="#f8c94f" stroke="#fff" stroke-width="1.8"/><circle cx="1104.40" cy="892.30" r="3.7" fill="#f8c94f" stroke="#fff" stroke-width="1.8"/><circle cx="1243.80" cy="889.80" r="3.7" fill="#f8c94f" stroke="#fff" stroke-width="1.8"/><circle cx="1383.20" cy="892.30" r="3.7" fill="#f8c94f" stroke="#fff" stroke-width="1.8"/><circle cx="1522.60" cy="892.20" r="3.7" fill="#f8c94f" stroke="#fff" stroke-width="1.8"/><circle cx="1662.00" cy="891.70" r="3.7" fill="#f8c94f" stroke="#fff" stroke-width="1.8"/><circle cx="1801.40" cy="889.00" r="3.7" fill="#f8c94f" stroke="#fff" stroke-width="1.8"/><circle cx="1940.80" cy="892.00" r="3.7" fill="#f8c94f" stroke="#fff" stroke-width="1.8"/><g clip-path="url(#carea)"><path d="M407.40 869.40 C463.16 861.64 492.56 863.79 546.80 850.00 C604.08 835.43 634.14 826.19 686.20 798.50 C745.66 766.87 764.84 717.15 825.60 701.70 C876.36 688.79 909.94 714.33 965.00 727.60 C1021.46 741.21 1053.30 779.77 1104.40 768.90 C1164.82 756.05 1182.40 686.95 1243.80 668.30 C1293.92 653.07 1328.75 671.95 1383.20 684.20 C1440.27 697.03 1465.97 715.44 1522.60 731.00 C1577.49 746.08 1615.27 779.29 1662.00 760.80 C1726.79 735.17 1737.23 643.10 1801.40 620.70 C1848.75 604.18 1885.04 646.38 1940.80 663.50 L1940.80 894.5 L407.40 894.5 Z" fill="rgba(76,155,232,0.35)"/><path d="M407.40 869.40 C463.16 861.64 492.56 863.79 546.80 850.00 C604.08 835.43 634.14 826.19 686.20 798.50 C745.66 766.87 764.84 717.15 825.60 701.70 C876.36 688.79 909.94 714.33 965.00 727.60 C1021.46 741.21 1053.30 779.77 1104.40 768.90 C1164.82 756.05 1182.40 686.95 1243.80 668.30 C1293.92 653.07 1328.75 671.95 1383.20 684.20 C1440.27 697.03 1465.97 715.44 1522.60 731.00 C1577.49 746.08 1615.27 779.29 1662.00 760.80 C1726.79 735.17 1737.23 643.10 1801.40 620.70 C1848.75 604.18 1885.04 646.38 1940.80 663.50" fill="none" stroke="#4c9be8" stroke-width="3"/></g><circle cx="407.40" cy="869.40" r="3.7" fill="#4c9be8" stroke="#fff" stroke-width="1.8"/><circle cx="546.80" cy="850.00" r="3.7" fill="#4c9be8" stroke="#fff" stroke-width="1.8"/><circle cx="686.20" cy="798.50" r="3.7" fill="#4c9be8" stroke="#fff" stroke-width="1.8"/><circle cx="825.60" cy="701.70" r="3.7" fill="#4c9be8" stroke="#fff" stroke-width="1.8"/><circle cx="965.00" cy="727.60" r="3.7" fill="#4c9be8" stroke="#fff" stroke-width="1.8"/><circle cx="1104.40" cy="768.90" r="3.7" fill="#4c9be8" stroke="#fff" stroke-width="1.8"/><circle cx="1243.80" cy="668.30" r="3.7" fill="#4c9be8" stroke="#fff" stroke-width="1.8"/><circle cx="1383.20" cy="684.20" r="3.7" fill="#4c9be8" stroke="#fff" stroke-width="1.8"/><circle cx="1522.60" cy="731.00" r="3.7" fill="#4c9be8" stroke="#fff" stroke-width="1.8"/><circle cx="1662.00" cy="760.80" r="3.7" fill="#4c9be8" stroke="#fff" stroke-width="1.8"/><circle cx="1801.40" cy="620.70" r="3.7" fill="#4c9be8" stroke="#fff" stroke-width="1.8"/><circle cx="1940.80" cy="663.50" r="3.7" fill="#4c9be8" stroke="#fff" stroke-width="1.8"/><g clip-path="url(#carea)"><path d="M407.40 858.80 C463.16 845.76 492.56 843.92 546.80 826.20 C604.08 807.48 633.60 796.87 686.20 767.70 C745.12 735.03 764.70 688.35 825.60 671.60 C876.22 657.67 910.81 677.06 965.00 691.00 C1022.33 705.74 1052.33 751.70 1104.40 743.30 C1163.85 733.70 1182.63 664.67 1243.80 646.00 C1294.15 630.63 1328.53 647.61 1383.20 658.20 C1440.05 669.21 1466.87 683.17 1522.60 700.00 C1578.39 716.85 1615.85 760.58 1662.00 742.40 C1727.37 716.66 1736.78 612.75 1801.40 590.20 C1848.30 573.83 1885.04 623.14 1940.80 645.10 L1940.80 894.5 L407.40 894.5 Z" fill="rgba(238,95,133,0.35)"/><path d="M407.40 858.80 C463.16 845.76 492.56 843.92 546.80 826.20 C604.08 807.48 633.60 796.87 686.20 767.70 C745.12 735.03 764.70 688.35 825.60 671.60 C876.22 657.67 910.81 677.06 965.00 691.00 C1022.33 705.74 1052.33 751.70 1104.40 743.30 C1163.85 733.70 1182.63 664.67 1243.80 646.00 C1294.15 630.63 1328.53 647.61 1383.20 658.20 C1440.05 669.21 1466.87 683.17 1522.60 700.00 C1578.39 716.85 1615.85 760.58 1662.00 742.40 C1727.37 716.66 1736.78 612.75 1801.40 590.20 C1848.30 573.83 1885.04 623.14 1940.80 645.10" fill="none" stroke="#ee5f85" stroke-width="3"/></g><circle cx="407.40" cy="858.80" r="3.7" fill="#ee5f85" stroke="#fff" stroke-width="1.8"/><circle cx="546.80" cy="826.20" r="3.7" fill="#ee5f85" stroke="#fff" stroke-width="1.8"/><circle cx="686.20" cy="767.70" r="3.7" fill="#ee5f85" stroke="#fff" stroke-width="1.8"/><circle cx="825.60" cy="671.60" r="3.7" fill="#ee5f85" stroke="#fff" stroke-width="1.8"/><circle cx="965.00" cy="691.00" r="3.7" fill="#ee5f85" stroke="#fff" stroke-width="1.8"/><circle cx="1104.40" cy="743.30" r="3.7" fill="#ee5f85" stroke="#fff" stroke-width="1.8"/><circle cx="1243.80" cy="646.00" r="3.7" fill="#ee5f85" stroke="#fff" stroke-width="1.8"/><circle cx="1383.20" cy="658.20" r="3.7" fill="#ee5f85" stroke="#fff" stroke-width="1.8"/><circle cx="1522.60" cy="700.00" r="3.7" fill="#ee5f85" stroke="#fff" stroke-width="1.8"/><circle cx="1662.00" cy="742.40" r="3.7" fill="#ee5f85" stroke="#fff" stroke-width="1.8"/><circle cx="1801.40" cy="590.20" r="3.7" fill="#ee5f85" stroke="#fff" stroke-width="1.8"/><circle cx="1940.80" cy="645.10" r="3.7" fill="#ee5f85" stroke="#fff" stroke-width="1.8"/><rect x="1951" y="665.0" width="40" height="12" fill="rgba(238,95,133,0.35)" stroke="#ee5f85" stroke-width="3"/><text x="1997.5" y="673.7" class="ct">WIP</text><rect x="1951" y="687.0" width="40" height="12" fill="rgba(76,155,232,0.35)" stroke="#4c9be8" stroke-width="3"/><text x="1997.5" y="695.7" class="ct">Time</text><rect x="1951" y="709.0" width="40" height="12" fill="rgba(248,201,79,0.3)" stroke="#f8c94f" stroke-width="3"/><text x="1997.5" y="717.7" class="ct">Sundries</text><rect x="1951" y="731.0" width="40" height="12" fill="rgba(228,230,234,0.35)" stroke="#e4e6ea" stroke-width="3"/><text x="1997.5" y="739.7" class="ct">Searches</text><rect x="1951" y="753.0" width="40" height="12" fill="rgba(92,191,184,0.35)" stroke="#5cbfb8" stroke-width="3"/><text x="1997.5" y="761.7" class="ct">Disbursements</text><rect x="1951" y="775.0" width="40" height="12" fill="rgba(156,180,200,0.35)" stroke="#9cb4c8" stroke-width="3"/><text x="1997.5" y="783.7" class="ct">Written Off Wip</text><rect x="1951" y="797.0" width="40" height="12" fill="rgba(220,220,220,0.35)" stroke="#dcdcdc" stroke-width="3"/><text x="1997.5" y="805.7" class="ct">Written Off Time</text><rect x="1951" y="819.0" width="40" height="12" fill="rgba(232,74,74,0.35)" stroke="#e84a4a" stroke-width="3"/><text x="1997.5" y="827.7" class="ct">Discounts</text><path d="M1504.4 661.1 H1649 Q1655 661.1 1655 667.1 V735.5 L1661 742 L1655 748.5 V816.4 Q1655 822.4 1649 822.4 H1504.4 Q1498.4 822.4 1498.4 816.4 V667.1 Q1498.4 661.1 1504.4 661.1 Z" fill="rgba(0,0,0,0.8)"/><text x="1504.4" y="677.9" class="ct" style="fill:#fff;font-weight:700">Apr</text><rect x="1503.2" y="688.0" width="13.8" height="13.8" fill="#fff"/><rect x="1504.9" y="689.7" width="10.4" height="10.4" fill="#ee5f85"/><text x="1518.5" y="697.8" class="ct" style="fill:#fff;letter-spacing:-0.1px">WIP: 44,060.34</text><rect x="1503.2" y="704.4" width="13.8" height="13.8" fill="#fff"/><rect x="1504.9" y="706.1" width="10.4" height="10.4" fill="#4c9be8"/><text x="1518.5" y="714.2" class="ct" style="fill:#fff;letter-spacing:-0.1px">Time: 38,674.8</text><rect x="1503.2" y="720.8" width="13.8" height="13.8" fill="#fff"/><rect x="1504.9" y="722.5" width="10.4" height="10.4" fill="#f8c94f"/><text x="1518.5" y="730.6" class="ct" style="fill:#fff;letter-spacing:-0.1px">Sundries: 792.39</text><rect x="1503.2" y="737.2" width="13.8" height="13.8" fill="#fff"/><rect x="1504.9" y="738.9" width="10.4" height="10.4" fill="#e4e6ea"/><text x="1518.5" y="747.0" class="ct" style="fill:#fff;letter-spacing:-0.1px">Searches: 3,931.5</text><rect x="1503.2" y="753.6" width="13.8" height="13.8" fill="#fff"/><rect x="1504.9" y="755.3" width="10.4" height="10.4" fill="#5cbfb8"/><text x="1518.5" y="763.4" class="ct" style="fill:#fff;letter-spacing:-0.1px">Disbursements: 5,385.54</text><rect x="1503.2" y="770.0" width="13.8" height="13.8" fill="#fff"/><rect x="1504.9" y="771.7" width="10.4" height="10.4" fill="#9cb4c8"/><text x="1518.5" y="779.8" class="ct" style="fill:#fff;letter-spacing:-0.1px">Written Off Wip: 282.6</text><rect x="1503.2" y="786.4" width="13.8" height="13.8" fill="#fff"/><rect x="1504.9" y="788.1" width="10.4" height="10.4" fill="#dcdcdc"/><text x="1518.5" y="796.2" class="ct" style="fill:#fff;letter-spacing:-0.1px">Written Off Time: 0</text><rect x="1503.2" y="802.8" width="13.8" height="13.8" fill="#fff"/><rect x="1504.9" y="804.5" width="10.4" height="10.4" fill="#e84a4a"/><text x="1518.5" y="812.6" class="ct" style="fill:#fff;letter-spacing:-0.1px">Discounts: -76</text></svg>
<div class="r" style="left:322px;top:956.6px;width:1802px;height:303.4px;background:#fff;border:1px solid #e6e6e6;border-radius:9px;box-sizing:border-box;"></div>
<div class="t" style="left:349.00px;top:988.00px;font-size:21.89px;letter-spacing:-0.163px;color:#222;">All Fee Earners Billable Hours Breakdown.</div>
<div class="r" style="left:1889px;top:982.4px;width:87px;height:35.60000000000002px;background:#fff;border-radius:18px;box-shadow:0 1px 3px rgba(0,0,0,.3);"></div>
<div class="t" style="left:1903.76px;top:994.00px;font-size:12.94px;letter-spacing:-0.583px;color:#333;">Last Week</div>
<div class="r" style="left:1986.5px;top:982.4px;width:87.5px;height:35.60000000000002px;background:#e6e6e6;border-radius:18px;box-shadow:0 1px 3px rgba(0,0,0,.3);"></div>
<div class="t" style="left:2002.74px;top:994.00px;font-size:12.80px;letter-spacing:-0.673px;color:#333;">This Week</div>
<div class="r" style="left:2097.3px;top:991.1999999999999px;width:4.399999999999636px;height:4.400000000000091px;background:#111;border-radius:50%;"></div>
<div class="r" style="left:2097.3px;top:999.0px;width:4.399999999999636px;height:4.400000000000091px;background:#111;border-radius:50%;"></div>
<div class="r" style="left:2097.3px;top:1006.6999999999999px;width:4.399999999999636px;height:4.400000000000091px;background:#111;border-radius:50%;"></div>
<div class="t" style="left:398.51px;top:1073.00px;font-size:12.39px;letter-spacing:0.019px;color:#6b6b6b;">Fee Earner</div>
<div class="t" style="left:603.25px;top:1072.00px;font-size:13.10px;letter-spacing:0.675px;color:#6b6b6b;">Mon</div>
<div class="t" style="left:792.24px;top:1073.00px;font-size:12.95px;letter-spacing:0.481px;color:#6b6b6b;">Tue</div>
<div class="t" style="left:976.63px;top:1072.00px;font-size:13.03px;letter-spacing:0.665px;color:#6b6b6b;">Wed</div>
<div class="t" style="left:1165.24px;top:1072.00px;font-size:13.21px;letter-spacing:0.700px;color:#6b6b6b;">Thu</div>
<div class="t" style="left:1356.46px;top:1072.00px;font-size:13.04px;letter-spacing:0.350px;color:#6b6b6b;">Fri</div>
<div class="t" style="left:1540.91px;top:1072.00px;font-size:13.07px;letter-spacing:0.521px;color:#6b6b6b;">Sat</div>
<div class="t" style="left:1726.43px;top:1073.00px;font-size:12.74px;letter-spacing:0.326px;color:#6b6b6b;">Sun</div>
<div class="t" style="left:1909.73px;top:1072.00px;font-size:13.58px;letter-spacing:0.623px;color:#6b6b6b;">Total</div>
<div class="r" style="left:523px;top:1059px;width:1px;height:40px;background:#f0f0f0;"></div>
<div class="r" style="left:710px;top:1059px;width:1px;height:40px;background:#f0f0f0;"></div>
<div class="r" style="left:897px;top:1059px;width:1px;height:40px;background:#f0f0f0;"></div>
<div class="r" style="left:1084px;top:1059px;width:1px;height:40px;background:#f0f0f0;"></div>
<div class="r" style="left:1271px;top:1059px;width:1px;height:40px;background:#f0f0f0;"></div>
<div class="r" style="left:1458px;top:1059px;width:1px;height:40px;background:#f0f0f0;"></div>
<div class="r" style="left:1645px;top:1059px;width:1px;height:40px;background:#f0f0f0;"></div>
<div class="r" style="left:1832px;top:1059px;width:1px;height:40px;background:#f0f0f0;"></div>
<div class="r" style="left:2019px;top:1059px;width:1px;height:40px;background:#f0f0f0;"></div>
<div class="r" style="left:337px;top:1099px;width:1772px;height:1.2999999999999545px;background:#dedede;"></div>
<div class="r" style="left:337px;top:1130px;width:1772px;height:1.2999999999999545px;background:#dedede;"></div>
<div class="r" style="left:337px;top:1161px;width:1772px;height:1.2999999999999545px;background:#dedede;"></div>
<div class="r" style="left:337px;top:1192px;width:1772px;height:1.2999999999999545px;background:#dedede;"></div>
<div class="r" style="left:337px;top:1223px;width:1772px;height:1.2999999999999545px;background:#dedede;"></div>
<div class="t" style="left:427.35px;top:1109.00px;font-size:10.62px;letter-spacing:-0.507px;color:#333;">ASHLEIGH</div>
<div class="r" style="left:606.2px;top:1100.5px;width:4.399999999999977px;height:25.5px;background:#2a7d55;"></div>
<div class="t" style="left:629.73px;top:1106.00px;font-size:11.63px;letter-spacing:0.000px;color:#333;">0</div>
<div class="r" style="left:787.8px;top:1100.5px;width:4.400000000000091px;height:25.5px;background:#2a7d55;"></div>
<div class="t" style="left:811.30px;top:1106.00px;font-size:11.63px;letter-spacing:0.000px;color:#333;">0</div>
<div class="r" style="left:969.3px;top:1100.5px;width:4.400000000000091px;height:25.5px;background:#2a7d55;"></div>
<div class="t" style="left:992.87px;top:1106.00px;font-size:11.63px;letter-spacing:0.000px;color:#333;">0</div>
<div class="r" style="left:1150.9px;top:1100.5px;width:4.399999999999864px;height:25.5px;background:#2a7d55;"></div>
<div class="t" style="left:1174.44px;top:1106.00px;font-size:11.63px;letter-spacing:0.000px;color:#333;">0</div>
<div class="r" style="left:1332.5px;top:1100.5px;width:4.400000000000091px;height:25.5px;background:#2a7d55;"></div>
<div class="t" style="left:1356.01px;top:1106.00px;font-size:11.63px;letter-spacing:0.000px;color:#333;">0</div>
<div class="r" style="left:1514.0px;top:1100.5px;width:4.5px;height:25.5px;background:#2a7d55;"></div>
<div class="t" style="left:1537.58px;top:1106.00px;font-size:11.63px;letter-spacing:0.000px;color:#333;">0</div>
<div class="r" style="left:1695.6px;top:1100.5px;width:4.400000000000091px;height:25.5px;background:#2a7d55;"></div>
<div class="t" style="left:1719.15px;top:1106.00px;font-size:11.63px;letter-spacing:0.000px;color:#333;">0</div>
<div class="r" style="left:1877.2px;top:1100.5px;width:4.399999999999864px;height:25.5px;background:#2a7d55;"></div>
<div class="t" style="left:1900.72px;top:1106.00px;font-size:11.63px;letter-spacing:0.000px;color:#333;">0</div>
<div class="t" style="left:435.93px;top:1140.00px;font-size:10.92px;letter-spacing:-0.303px;color:#333;">BRIAN</div>
<div class="r" style="left:606.2px;top:1131.5px;width:4.399999999999977px;height:25.5px;background:#2a7d55;"></div>
<div class="t" style="left:629.73px;top:1137.00px;font-size:11.63px;letter-spacing:0.000px;color:#333;">0</div>
<div class="r" style="left:787.8px;top:1131.5px;width:4.400000000000091px;height:25.5px;background:#2a7d55;"></div>
<div class="t" style="left:811.30px;top:1137.00px;font-size:11.63px;letter-spacing:0.000px;color:#333;">0</div>
<div class="r" style="left:969.3px;top:1131.5px;width:4.400000000000091px;height:25.5px;background:#2a7d55;"></div>
<div class="t" style="left:992.87px;top:1137.00px;font-size:11.63px;letter-spacing:0.000px;color:#333;">0</div>
<div class="r" style="left:1150.9px;top:1131.5px;width:4.399999999999864px;height:25.5px;background:#2a7d55;"></div>
<div class="t" style="left:1174.44px;top:1137.00px;font-size:11.63px;letter-spacing:0.000px;color:#333;">0</div>
<div class="r" style="left:1332.5px;top:1131.5px;width:4.400000000000091px;height:25.5px;background:#2a7d55;"></div>
<div class="t" style="left:1356.01px;top:1137.00px;font-size:11.63px;letter-spacing:0.000px;color:#333;">0</div>
<div class="r" style="left:1514.0px;top:1131.5px;width:4.5px;height:25.5px;background:#2a7d55;"></div>
<div class="t" style="left:1537.58px;top:1137.00px;font-size:11.63px;letter-spacing:0.000px;color:#333;">0</div>
<div class="r" style="left:1695.6px;top:1131.5px;width:4.400000000000091px;height:25.5px;background:#2a7d55;"></div>
<div class="t" style="left:1719.15px;top:1137.00px;font-size:11.63px;letter-spacing:0.000px;color:#333;">0</div>
<div class="r" style="left:1877.2px;top:1131.5px;width:4.399999999999864px;height:25.5px;background:#2a7d55;"></div>
<div class="t" style="left:1900.72px;top:1137.00px;font-size:11.63px;letter-spacing:0.000px;color:#333;">0</div>
<div class="t" style="left:438.68px;top:1172.00px;font-size:10.27px;letter-spacing:-0.723px;color:#333;">KYLIE</div>
<div class="r" style="left:606.2px;top:1162.5px;width:4.399999999999977px;height:25.5px;background:#2a7d55;"></div>
<div class="t" style="left:629.73px;top:1168.00px;font-size:11.63px;letter-spacing:0.000px;color:#333;">0</div>
<div class="r" style="left:787.8px;top:1162.5px;width:4.400000000000091px;height:25.5px;background:#2a7d55;"></div>
<div class="t" style="left:811.30px;top:1168.00px;font-size:11.63px;letter-spacing:0.000px;color:#333;">0</div>
<div class="r" style="left:969.3px;top:1162.5px;width:4.400000000000091px;height:25.5px;background:#2a7d55;"></div>
<div class="t" style="left:992.87px;top:1168.00px;font-size:11.63px;letter-spacing:0.000px;color:#333;">0</div>
<div class="r" style="left:1150.9px;top:1162.5px;width:4.399999999999864px;height:25.5px;background:#2a7d55;"></div>
<div class="t" style="left:1174.44px;top:1168.00px;font-size:11.63px;letter-spacing:0.000px;color:#333;">0</div>
<div class="r" style="left:1332.5px;top:1162.5px;width:4.400000000000091px;height:25.5px;background:#2a7d55;"></div>
<div class="t" style="left:1356.01px;top:1168.00px;font-size:11.63px;letter-spacing:0.000px;color:#333;">0</div>
<div class="r" style="left:1514.0px;top:1162.5px;width:4.5px;height:25.5px;background:#2a7d55;"></div>
<div class="t" style="left:1537.58px;top:1168.00px;font-size:11.63px;letter-spacing:0.000px;color:#333;">0</div>
<div class="r" style="left:1695.6px;top:1162.5px;width:4.400000000000091px;height:25.5px;background:#2a7d55;"></div>
<div class="t" style="left:1719.15px;top:1168.00px;font-size:11.63px;letter-spacing:0.000px;color:#333;">0</div>
<div class="r" style="left:1877.2px;top:1162.5px;width:4.399999999999864px;height:25.5px;background:#2a7d55;"></div>
<div class="t" style="left:1900.72px;top:1168.00px;font-size:11.63px;letter-spacing:0.000px;color:#333;">0</div>
<div class="t" style="left:429.64px;top:1202.00px;font-size:10.81px;letter-spacing:-0.366px;color:#333;">KATRINA</div>
<div class="r" style="left:606.2px;top:1193.5px;width:4.399999999999977px;height:25.5px;background:#2a7d55;"></div>
<div class="t" style="left:629.73px;top:1199.00px;font-size:11.63px;letter-spacing:0.000px;color:#333;">0</div>
<div class="r" style="left:787.8px;top:1193.5px;width:4.400000000000091px;height:25.5px;background:#2a7d55;"></div>
<div class="t" style="left:811.30px;top:1199.00px;font-size:11.63px;letter-spacing:0.000px;color:#333;">0</div>
<div class="r" style="left:969.3px;top:1193.5px;width:4.400000000000091px;height:25.5px;background:#2a7d55;"></div>
<div class="t" style="left:992.87px;top:1199.00px;font-size:11.63px;letter-spacing:0.000px;color:#333;">0</div>
<div class="r" style="left:1150.9px;top:1193.5px;width:4.399999999999864px;height:25.5px;background:#2a7d55;"></div>
<div class="t" style="left:1174.44px;top:1199.00px;font-size:11.63px;letter-spacing:0.000px;color:#333;">0</div>
<div class="r" style="left:1332.5px;top:1193.5px;width:4.400000000000091px;height:25.5px;background:#2a7d55;"></div>
<div class="t" style="left:1356.01px;top:1199.00px;font-size:11.63px;letter-spacing:0.000px;color:#333;">0</div>
<div class="r" style="left:1514.0px;top:1193.5px;width:4.5px;height:25.5px;background:#2a7d55;"></div>
<div class="t" style="left:1537.58px;top:1199.00px;font-size:11.63px;letter-spacing:0.000px;color:#333;">0</div>
<div class="r" style="left:1695.6px;top:1193.5px;width:4.400000000000091px;height:25.5px;background:#2a7d55;"></div>
<div class="t" style="left:1719.15px;top:1199.00px;font-size:11.63px;letter-spacing:0.000px;color:#333;">0</div>
<div class="r" style="left:1877.2px;top:1193.5px;width:4.399999999999864px;height:25.5px;background:#2a7d55;"></div>
<div class="t" style="left:1900.72px;top:1199.00px;font-size:11.63px;letter-spacing:0.000px;color:#333;">0</div>
<div class="t" style="left:428.15px;top:1233.00px;font-size:10.59px;letter-spacing:-0.583px;color:#333;">MACLEAN</div>
<div class="r" style="left:606.2px;top:1224.5px;width:4.399999999999977px;height:25.5px;background:#2a7d55;"></div>
<div class="t" style="left:629.73px;top:1230.00px;font-size:11.63px;letter-spacing:0.000px;color:#333;">0</div>
<div class="r" style="left:787.8px;top:1224.5px;width:4.400000000000091px;height:25.5px;background:#2a7d55;"></div>
<div class="t" style="left:811.30px;top:1230.00px;font-size:11.63px;letter-spacing:0.000px;color:#333;">0</div>
<div class="r" style="left:969.3px;top:1224.5px;width:4.400000000000091px;height:25.5px;background:#2a7d55;"></div>
<div class="t" style="left:992.87px;top:1230.00px;font-size:11.63px;letter-spacing:0.000px;color:#333;">0</div>
<div class="r" style="left:1150.9px;top:1224.5px;width:4.399999999999864px;height:25.5px;background:#2a7d55;"></div>
<div class="t" style="left:1174.44px;top:1230.00px;font-size:11.63px;letter-spacing:0.000px;color:#333;">0</div>
<div class="r" style="left:1332.5px;top:1224.5px;width:4.400000000000091px;height:25.5px;background:#2a7d55;"></div>
<div class="t" style="left:1356.01px;top:1230.00px;font-size:11.63px;letter-spacing:0.000px;color:#333;">0</div>
<div class="r" style="left:1514.0px;top:1224.5px;width:4.5px;height:25.5px;background:#2a7d55;"></div>
<div class="t" style="left:1537.58px;top:1230.00px;font-size:11.63px;letter-spacing:0.000px;color:#333;">0</div>
<div class="r" style="left:1695.6px;top:1224.5px;width:4.400000000000091px;height:25.5px;background:#2a7d55;"></div>
<div class="t" style="left:1719.15px;top:1230.00px;font-size:11.63px;letter-spacing:0.000px;color:#333;">0</div>
<div class="r" style="left:1877.2px;top:1224.5px;width:4.399999999999864px;height:25.5px;background:#2a7d55;"></div>
<div class="t" style="left:1900.72px;top:1230.00px;font-size:11.63px;letter-spacing:0.000px;color:#333;">0</div>
<div class="r" style="left:240px;top:1235.6px;width:1998px;height:6.400000000000091px;background:#f4f4f4;"></div>
<div class="r" style="left:0px;top:0px;width:240px;height:1269px;background:#2f3340;box-shadow:2px 0 6px rgba(0,0,0,.18);"></div>
<div class="r" style="left:0px;top:0px;width:240px;height:124px;background:#1f2129;box-shadow:0 2px 4px rgba(0,0,0,.25);"></div>
<svg class="r" style="left:8px;top:13px;" width="44" height="45" viewBox="0 0 44 45"><rect width="44" height="45" fill="#5f9443"/><path d="M1 45 C13 44 17 34 20 24 C24 10 31 2 44 1 C37 4 33 12 29.5 24 C26 36 18 45 1 45 Z" fill="#1f2129"/></svg>
<div class="t" style="left:61.73px;top:27.00px;font-size:18.02px;letter-spacing:-0.319px;color:#fff;font-weight:700;">MEG</div>
<div class="r" style="left:210px;top:30.2px;width:12px;height:1.8000000000000007px;background:#bdbdbd;"></div>
<div class="r" style="left:210px;top:33.2px;width:12px;height:1.7999999999999972px;background:#bdbdbd;"></div>
<div class="r" style="left:210px;top:36.2px;width:12px;height:1.7999999999999972px;background:#bdbdbd;"></div>
<svg class="r" style="left:47px;top:57px;" width="145" height="36" viewBox="0 0 145 36"><path d="M0 1 L20 0 L145 1 L145 34 L110 35 L20 35 L0 34 Z" fill="#000"/></svg>
<div class="t" style="left:74.23px;top:93.00px;font-size:11.90px;letter-spacing:0.581px;color:#fff;font-weight:700;">Maycomb Law</div>
<div class="r" style="left:4px;top:132px;width:209px;height:40px;background:#52a34b;border-radius:0 20px 20px 0;"></div>
<div class="t" style="left:65.12px;top:144.00px;font-size:13.56px;letter-spacing:0.198px;color:#ffffff;">Dashboard</div>
<div class="t" style="left:65.11px;top:184.00px;font-size:13.57px;letter-spacing:0.184px;color:#ffffff;">Matters</div>
<div class="t" style="left:65.52px;top:224.00px;font-size:13.61px;letter-spacing:0.210px;color:#ffffff;">Contacts</div>
<div class="t" style="left:65.94px;top:264.00px;font-size:13.24px;letter-spacing:0.007px;color:#ffffff;">Time entries</div>
<div class="t" style="left:65.14px;top:304.00px;font-size:13.27px;letter-spacing:0.022px;color:#ffffff;">Diary</div>
<div class="t" style="left:65.00px;top:344.00px;font-size:13.38px;letter-spacing:0.079px;color:#ffffff;">Invoices</div>
<div class="t" style="left:65.60px;top:384.00px;font-size:13.31px;letter-spacing:0.049px;color:#ffffff;">Spend money</div>
<div class="t" style="left:65.14px;top:424.00px;font-size:13.27px;letter-spacing:0.022px;color:#ffffff;">Receive money</div>
<div class="t" style="left:64.99px;top:464.00px;font-size:13.44px;letter-spacing:0.123px;color:#ffffff;">Inbox</div>
<div class="t" style="left:65.53px;top:504.00px;font-size:13.34px;letter-spacing:0.054px;color:#ffffff;">Conflict Check</div>
<div class="t" style="left:65.60px;top:544.00px;font-size:13.33px;letter-spacing:0.054px;color:#ffffff;">Searching</div>
<div class="t" style="left:65.61px;top:584.00px;font-size:13.21px;letter-spacing:-0.011px;color:#ffffff;">Safe Custody</div>
<div class="t" style="left:65.94px;top:624.00px;font-size:13.10px;letter-spacing:-0.067px;color:#ffffff;">Trust Money</div>
<svg class="r" style="left:28px;top:141px;" width="22" height="22" viewBox="0 0 22 22"><g fill="#2b7c9a"><rect x="3" y="13.5" width="3" height="6"/><rect x="7.5" y="11" width="3" height="8.5"/><rect x="12" y="9" width="3" height="10.5"/><rect x="16.5" y="6.5" width="3" height="13"/></g><path d="M0.5 7 V21 H22" stroke="#2b7c9a" stroke-width="1" fill="none"/><path d="M3.5 7.5 L9 4.5 L10.5 6 L17 1.5" stroke="#2b7c9a" stroke-width="1.2" fill="none"/><path d="M15 0.5 L18.5 0.3 L18 3.5 Z" fill="#2b7c9a"/></svg>
<svg class="r" style="left:29px;top:185px;" width="20" height="14" viewBox="0 0 20 14"><rect x="0" y="0" width="20" height="14" rx="1" fill="#f5b330"/><path d="M0 3 L10 7 L20 3" stroke="#8a6a20" stroke-width="0.8" fill="none"/><rect x="9" y="5.5" width="2" height="2" fill="#8a6a20"/></svg>
<svg class="r" style="left:29px;top:225px;" width="20" height="13" viewBox="0 0 20 13"><rect x="0" y="0" width="20" height="13" fill="#fff"/><rect x="1" y="1" width="6" height="6" fill="#9a9a9a"/><circle cx="4" cy="3.3" r="1.4" fill="#fff"/><path d="M1.5 7 Q4 4.5 6.5 7 Z" fill="#fff"/><rect x="10" y="1.5" width="9" height="1.2" fill="#2f3340"/><rect x="10" y="4" width="9" height="1.2" fill="#2f3340"/><rect x="10" y="6.5" width="9" height="1.2" fill="#2f3340"/><rect x="0" y="8.5" width="20" height="1" fill="#2f3340"/><rect x="2" y="10.3" width="5" height="1.2" fill="#2f3340"/></svg>
<svg class="r" style="left:29px;top:260px;" width="20" height="24" viewBox="0 0 20 24"><rect x="8" y="1" width="4" height="1.6" fill="#3b66c4"/><rect x="9.2" y="2" width="1.6" height="3" fill="#3b66c4"/><path d="M15 5 L17 3.5" stroke="#3b66c4" stroke-width="1.5"/><circle cx="10" cy="14" r="8.3" fill="#fff" stroke="#3b66c4" stroke-width="1.6"/><rect x="9.3" y="7.5" width="1.4" height="6" fill="#3b66c4"/></svg>
<svg class="r" style="left:28px;top:301px;" width="22" height="21" viewBox="0 0 22 21"><path d="M0 4 H22 V17 L18 21 H0 Z" fill="#cfcfcf"/><rect x="0" y="3" width="22" height="4" fill="#4caf50"/><rect x="2.0" y="0" width="1.5" height="5" fill="#4caf50"/><rect x="6.3" y="0" width="1.5" height="5" fill="#4caf50"/><rect x="10.6" y="0" width="1.5" height="5" fill="#4caf50"/><rect x="14.899999999999999" y="0" width="1.5" height="5" fill="#4caf50"/><rect x="19.2" y="0" width="1.5" height="5" fill="#4caf50"/><rect x="3.0" y="9.5" width="2.4" height="2" fill="#333"/><rect x="6.6" y="9.5" width="2.4" height="2" fill="#333"/><rect x="10.2" y="9.5" width="2.4" height="2" fill="#333"/><rect x="13.8" y="9.5" width="2.4" height="2" fill="#333"/><rect x="17.4" y="9.5" width="2.4" height="2" fill="#333"/><rect x="3.0" y="12.8" width="2.4" height="2" fill="#333"/><rect x="6.6" y="12.8" width="2.4" height="2" fill="#333"/><rect x="10.2" y="12.8" width="2.4" height="2" fill="#333"/><rect x="13.8" y="12.8" width="2.4" height="2" fill="#333"/><rect x="17.4" y="12.8" width="2.4" height="2" fill="#333"/><rect x="3.0" y="16.1" width="2.4" height="2" fill="#333"/><rect x="6.6" y="16.1" width="2.4" height="2" fill="#333"/><rect x="10.2" y="16.1" width="2.4" height="2" fill="#333"/><rect x="13.8" y="16.1" width="2.4" height="2" fill="#333"/><rect x="17.4" y="16.1" width="2.4" height="2" fill="#333"/><path d="M18 21 L18 17 L22 17 Z" fill="#f0f0f0"/></svg>
<svg class="r" style="left:30px;top:341px;" width="18" height="22" viewBox="0 0 18 22"><rect x="0" y="0" width="18" height="22" rx="2.5" fill="#3d93d9"/><rect x="2.5" y="2.5" width="13" height="4" fill="#fff"/><rect x="9" y="3.5" width="5" height="2" fill="#2a3a7a"/><rect x="3.5" y="8.5" width="2.8" height="1.8" fill="#fff"/><rect x="7.7" y="8.5" width="2.8" height="1.8" fill="#fff"/><rect x="11.9" y="8.5" width="2.8" height="1.8" fill="#fff"/><rect x="3.5" y="12.3" width="2.8" height="1.8" fill="#fff"/><rect x="7.7" y="12.3" width="2.8" height="1.8" fill="#fff"/><rect x="11.9" y="12.3" width="2.8" height="1.8" fill="#fff"/><rect x="3.5" y="16.1" width="2.8" height="1.8" fill="#fff"/><rect x="7.7" y="16.1" width="2.8" height="1.8" fill="#fff"/><rect x="11.9" y="16.1" width="2.8" height="1.8" fill="#fff"/></svg>
<svg class="r" style="left:28px;top:385px;" width="22" height="14" viewBox="0 0 22 14"><rect x="0" y="0" width="22" height="14" rx="2" fill="#3b8f43"/><rect x="0" y="3" width="22" height="1.5" fill="#2e7036"/><rect x="2.5" y="7" width="6" height="2.5" fill="#6ab06f"/><rect x="11" y="6.5" width="8" height="1.2" fill="#2e7036"/><rect x="11" y="9" width="6" height="1.2" fill="#2e7036"/></svg>
<svg class="r" style="left:32px;top:418px;" width="14" height="23" viewBox="0 0 14 23"><path d="M0 1 L2 0 L4 1 L6 0 L8 1 L10 0 L12 1 L14 0 V23 L12 22 L10 23 L8 22 L6 23 L4 22 L2 23 L0 22 Z" fill="#6a53c0"/><rect x="3.5" y="6" width="7" height="1.3" fill="#3a2c80"/><rect x="3.5" y="9.5" width="7" height="1.3" fill="#3a2c80"/><rect x="3.5" y="13" width="7" height="1.3" fill="#3a2c80"/><rect x="3.5" y="16.5" width="7" height="1.3" fill="#3a2c80"/></svg>
<svg class="r" style="left:29px;top:462px;" width="20" height="20" viewBox="0 0 20 20"><path d="M0 8 L10 0 L20 8 Z" fill="#3b7fd9"/><rect x="0" y="8" width="20" height="12" fill="#5cc6ee"/><path d="M0 8 L10 14 L20 8" stroke="#3b7fd9" stroke-width="1.2" fill="#3b7fd9"/><path d="M0 20 L8 13 M20 20 L12 13" stroke="#2f3340" stroke-width="0.9"/></svg>
<svg class="r" style="left:29px;top:502px;" width="20" height="20" viewBox="0 0 20 20"><rect x="9" y="0" width="2.2" height="20" fill="#9fd047"/><path d="M5 2 H15 L16.5 3.5 L15 5 H5 Z" fill="#9fd047"/><path d="M15 6.5 H5 L3.5 8 L5 9.5 H15 Z" fill="#9fd047"/><circle cx="4" cy="16" r="3.8" fill="#2e7a3a"/><circle cx="16" cy="16" r="3.8" fill="#2e7a3a"/><path d="M2.5 14.5 L5.5 17.5 M5.5 14.5 L2.5 17.5" stroke="#9fd047" stroke-width="0.8"/><path d="M14 16 L15.5 17.5 L18 14.5" stroke="#9fd047" stroke-width="0.8" fill="none"/></svg>
<svg class="r" style="left:28px;top:541px;" width="22" height="21" viewBox="0 0 22 21"><rect x="6" y="0" width="16" height="13" fill="#a3e283"/><rect x="6" y="2" width="16" height="0.8" fill="#2f3340"/><rect x="11" y="5" width="9" height="0.9" fill="#5a9a4a"/><rect x="11" y="7.5" width="9" height="0.9" fill="#5a9a4a"/><rect x="11" y="10" width="9" height="0.9" fill="#5a9a4a"/><circle cx="6" cy="10.5" r="4.5" fill="#a3e283" stroke="#2f3340" stroke-width="1"/><path d="M3 14 L0.5 19.5" stroke="#a3e283" stroke-width="2"/></svg>
<svg class="r" style="left:29px;top:582px;" width="20" height="20" viewBox="0 0 20 20"><rect x="0" y="0" width="20" height="17.5" rx="1" fill="#2b3b8f"/><rect x="2" y="2" width="16" height="13.5" fill="none" stroke="#fff" stroke-width="0.8"/><circle cx="10.5" cy="8.8" r="3.5" fill="#fff"/><rect x="1" y="17.5" width="3" height="2" fill="#2b3b8f"/><rect x="16" y="17.5" width="3" height="2" fill="#2b3b8f"/></svg>
<svg class="r" style="left:29px;top:623px;" width="20" height="18" viewBox="0 0 20 18"><path d="M0 6 L10 0 L20 6 Z" fill="#2b8aa3"/><rect x="0" y="6" width="20" height="1.5" fill="#2b8aa3"/><rect x="2.5" y="8" width="2.2" height="8" fill="#2b8aa3"/><rect x="8.9" y="8" width="2.2" height="8" fill="#2b8aa3"/><rect x="15.3" y="8" width="2.2" height="8" fill="#2b8aa3"/><rect x="1" y="16" width="4.5" height="2" fill="#2b8aa3"/><rect x="7.7" y="16" width="4.5" height="2" fill="#2b8aa3"/><rect x="14.5" y="16" width="4.5" height="2" fill="#2b8aa3"/><circle cx="10" cy="3.8" r="1.2" fill="#2f3340"/></svg>
<div class="r" style="left:14px;top:1239px;width:26px;height:14px;background:#1f2129;border-radius:7px;"></div>
<div class="r" style="left:4px;top:1236px;width:20px;height:20px;background:#fafafa;border-radius:50%;box-shadow:0 1px 2px rgba(0,0,0,.3);"></div>
<div class="t" style="left:47.18px;top:1240.00px;font-size:12.79px;letter-spacing:0.068px;color:#fff;">Edit Favourites</div>
<div class="r" style="left:2240px;top:162px;width:8px;height:928px;background:#9a9a9a;border-radius:4px;"></div>
<div class="r" style="left:2250px;top:0px;width:304px;height:1242px;background:#fafafa;box-shadow:-2px 0 5px rgba(0,0,0,.18);"></div>
<div class="r" style="left:2250px;top:0px;width:304px;height:1px;background:#e0e0e0;"></div>
<div class="t" style="left:2263.94px;top:8.00px;font-size:14.59px;letter-spacing:0.430px;color:#222;">Setup Guide</div>
<div class="r" style="left:2260px;top:26px;width:116px;height:4px;background:#21805e;"></div>
<div class="r" style="left:2376px;top:26px;width:174.5px;height:4px;background:#b4e02b;"></div>
<div class="t" style="left:2260.05px;top:44.00px;font-size:12.78px;letter-spacing:0.211px;color:#444;">3 of 9 Tasks Complete</div>
<div class="r" style="left:2250px;top:68px;width:304px;height:1px;background:#e2e2e2;"></div>
<svg class="r" style="left:2260px;top:88.7px;" width="16" height="16" viewBox="0 0 16 16"><circle cx="8" cy="8" r="8" fill="#4ba64b"/><path d="M4.3 8.3 L6.9 10.8 L11.8 5.6" stroke="#fff" stroke-width="1.8" fill="none"/></svg>
<div class="t" style="left:2284.40px;top:91.00px;font-size:12.90px;letter-spacing:0.185px;color:#333;">Add your Organisational Details</div>
<svg class="r" style="left:2534px;top:90.2px;" width="9" height="12" viewBox="0 0 9 12"><path d="M1.8 1.2 L6.6 6 L1.8 10.8" stroke="#222" stroke-width="2" fill="none"/></svg>
<svg class="r" style="left:2260px;top:124.6px;" width="16" height="16" viewBox="0 0 16 16"><circle cx="8" cy="8" r="6.6" fill="none" stroke="#b8b8b8" stroke-width="1.1" stroke-dasharray="1.4 1.4"/></svg>
<div class="t" style="left:2283.76px;top:127.00px;font-size:12.89px;letter-spacing:0.190px;color:#333;">Customise your Defaults</div>
<svg class="r" style="left:2534px;top:126.1px;" width="9" height="12" viewBox="0 0 9 12"><path d="M1.8 1.2 L6.6 6 L1.8 10.8" stroke="#222" stroke-width="2" fill="none"/></svg>
<svg class="r" style="left:2260px;top:160.6px;" width="16" height="16" viewBox="0 0 16 16"><circle cx="8" cy="8" r="8" fill="#4ba64b"/><path d="M4.3 8.3 L6.9 10.8 L11.8 5.6" stroke="#fff" stroke-width="1.8" fill="none"/></svg>
<div class="t" style="left:2283.25px;top:163.00px;font-size:12.83px;letter-spacing:0.147px;color:#333;">Input your Trust Details</div>
<svg class="r" style="left:2534px;top:162.1px;" width="9" height="12" viewBox="0 0 9 12"><path d="M1.8 1.2 L6.6 6 L1.8 10.8" stroke="#222" stroke-width="2" fill="none"/></svg>
<svg class="r" style="left:2260px;top:196.6px;" width="16" height="16" viewBox="0 0 16 16"><circle cx="8" cy="8" r="8" fill="#4ba64b"/><path d="M4.3 8.3 L6.9 10.8 L11.8 5.6" stroke="#fff" stroke-width="1.8" fill="none"/></svg>
<div class="t" style="left:2284.40px;top:199.00px;font-size:12.65px;letter-spacing:0.077px;color:#333;">Add your Users</div>
<svg class="r" style="left:2534px;top:198.1px;" width="9" height="12" viewBox="0 0 9 12"><path d="M1.8 1.2 L6.6 6 L1.8 10.8" stroke="#222" stroke-width="2" fill="none"/></svg>
<svg class="r" style="left:2260px;top:232.5px;" width="16" height="16" viewBox="0 0 16 16"><circle cx="8" cy="8" r="6.6" fill="none" stroke="#b8b8b8" stroke-width="1.1" stroke-dasharray="1.4 1.4"/></svg>
<div class="t" style="left:2283.75px;top:234.00px;font-size:13.01px;letter-spacing:0.247px;color:#333;">Customise your Invoice Template</div>
<svg class="r" style="left:2534px;top:234.0px;" width="9" height="12" viewBox="0 0 9 12"><path d="M1.8 1.2 L6.6 6 L1.8 10.8" stroke="#222" stroke-width="2" fill="none"/></svg>
<svg class="r" style="left:2260px;top:268.9px;" width="16" height="16" viewBox="0 0 16 16"><circle cx="8" cy="8" r="6.6" fill="none" stroke="#b8b8b8" stroke-width="1.1" stroke-dasharray="1.4 1.4"/></svg>
<div class="t" style="left:2284.40px;top:271.00px;font-size:12.61px;letter-spacing:0.055px;color:#333;">Add your Fixed Fees &amp; Sundry Pricing</div>
<svg class="r" style="left:2534px;top:270.4px;" width="9" height="12" viewBox="0 0 9 12"><path d="M1.8 1.2 L6.6 6 L1.8 10.8" stroke="#222" stroke-width="2" fill="none"/></svg>
<svg class="r" style="left:2260px;top:304.7px;" width="16" height="16" viewBox="0 0 16 16"><circle cx="8" cy="8" r="6.6" fill="none" stroke="#b8b8b8" stroke-width="1.1" stroke-dasharray="1.4 1.4"/></svg>
<div class="t" style="left:2283.82px;top:307.00px;font-size:12.89px;letter-spacing:0.191px;color:#333;">Setup your Document Generation Details</div>
<svg class="r" style="left:2534px;top:306.2px;" width="9" height="12" viewBox="0 0 9 12"><path d="M1.8 1.2 L6.6 6 L1.8 10.8" stroke="#222" stroke-width="2" fill="none"/></svg>
<svg class="r" style="left:2260px;top:340.4px;" width="16" height="16" viewBox="0 0 16 16"><circle cx="8" cy="8" r="6.6" fill="none" stroke="#b8b8b8" stroke-width="1.1" stroke-dasharray="1.4 1.4"/></svg>
<div class="t" style="left:2283.82px;top:343.00px;font-size:12.93px;letter-spacing:0.199px;color:#333;">Setup your Integrations</div>
<svg class="r" style="left:2534px;top:341.9px;" width="9" height="12" viewBox="0 0 9 12"><path d="M1.8 1.2 L6.6 6 L1.8 10.8" stroke="#222" stroke-width="2" fill="none"/></svg>
<svg class="r" style="left:2260px;top:381px;" width="16" height="16" viewBox="0 0 16 16"><circle cx="8" cy="8" r="6.6" fill="none" stroke="#b8b8b8" stroke-width="1.1" stroke-dasharray="1.4 1.4"/></svg>
<div class="t" style="left:2283.38px;top:376.00px;font-size:12.79px;letter-spacing:0.131px;color:#333;">Familiarise yourself with our Lexon</div>
<div class="t" style="left:2283.54px;top:391.00px;font-size:13.30px;letter-spacing:0.364px;color:#333;">integration</div>
<svg class="r" style="left:2534px;top:382.5px;" width="9" height="12" viewBox="0 0 9 12"><path d="M1.8 1.2 L6.6 6 L1.8 10.8" stroke="#222" stroke-width="2" fill="none"/></svg>
<div class="r" style="left:2520.7px;top:1179px;width:49.30000000000018px;height:48px;background:#6f9f55;border-radius:10px;"></div>
<svg class="r" style="left:2532px;top:1192px;" width="24" height="24" viewBox="0 0 24 24"><circle cx="11.5" cy="11.5" r="9.5" fill="none" stroke="#fff" stroke-width="1.8"/><path d="M8.3 9.3 Q8.3 6.3 11.5 6.3 Q14.6 6.3 14.6 9 Q14.6 10.6 12.6 11.6 Q11.6 12.2 11.6 13.6" stroke="#fff" stroke-width="1.8" fill="none"/><circle cx="11.6" cy="16.4" r="1.2" fill="#fff"/></svg>
<div class="r" style="left:240px;top:1242px;width:2314px;height:27px;background:#1e2029;"></div>
<div class="t" style="left:256.25px;top:1254.00px;font-size:10.98px;letter-spacing:-0.035px;color:#9a9a9a;font-weight:700;">Version 11.5.95</div>
<div class="t" style="left:1983.69px;top:1254.00px;font-size:12.53px;letter-spacing:-0.660px;color:#fff;font-weight:700;">Privacy Policy</div>
<div class="t" style="left:2072.08px;top:1254.00px;font-size:12.62px;letter-spacing:-0.658px;color:#fff;font-weight:700;">End User Licence Agreement</div>
<div class="t" style="left:2294.81px;top:1254.00px;font-size:12.52px;letter-spacing:-0.639px;color:#fff;font-weight:700;">©2026 Silqware Pty Ltd. All Rights Reserved</div>
</body></html>
